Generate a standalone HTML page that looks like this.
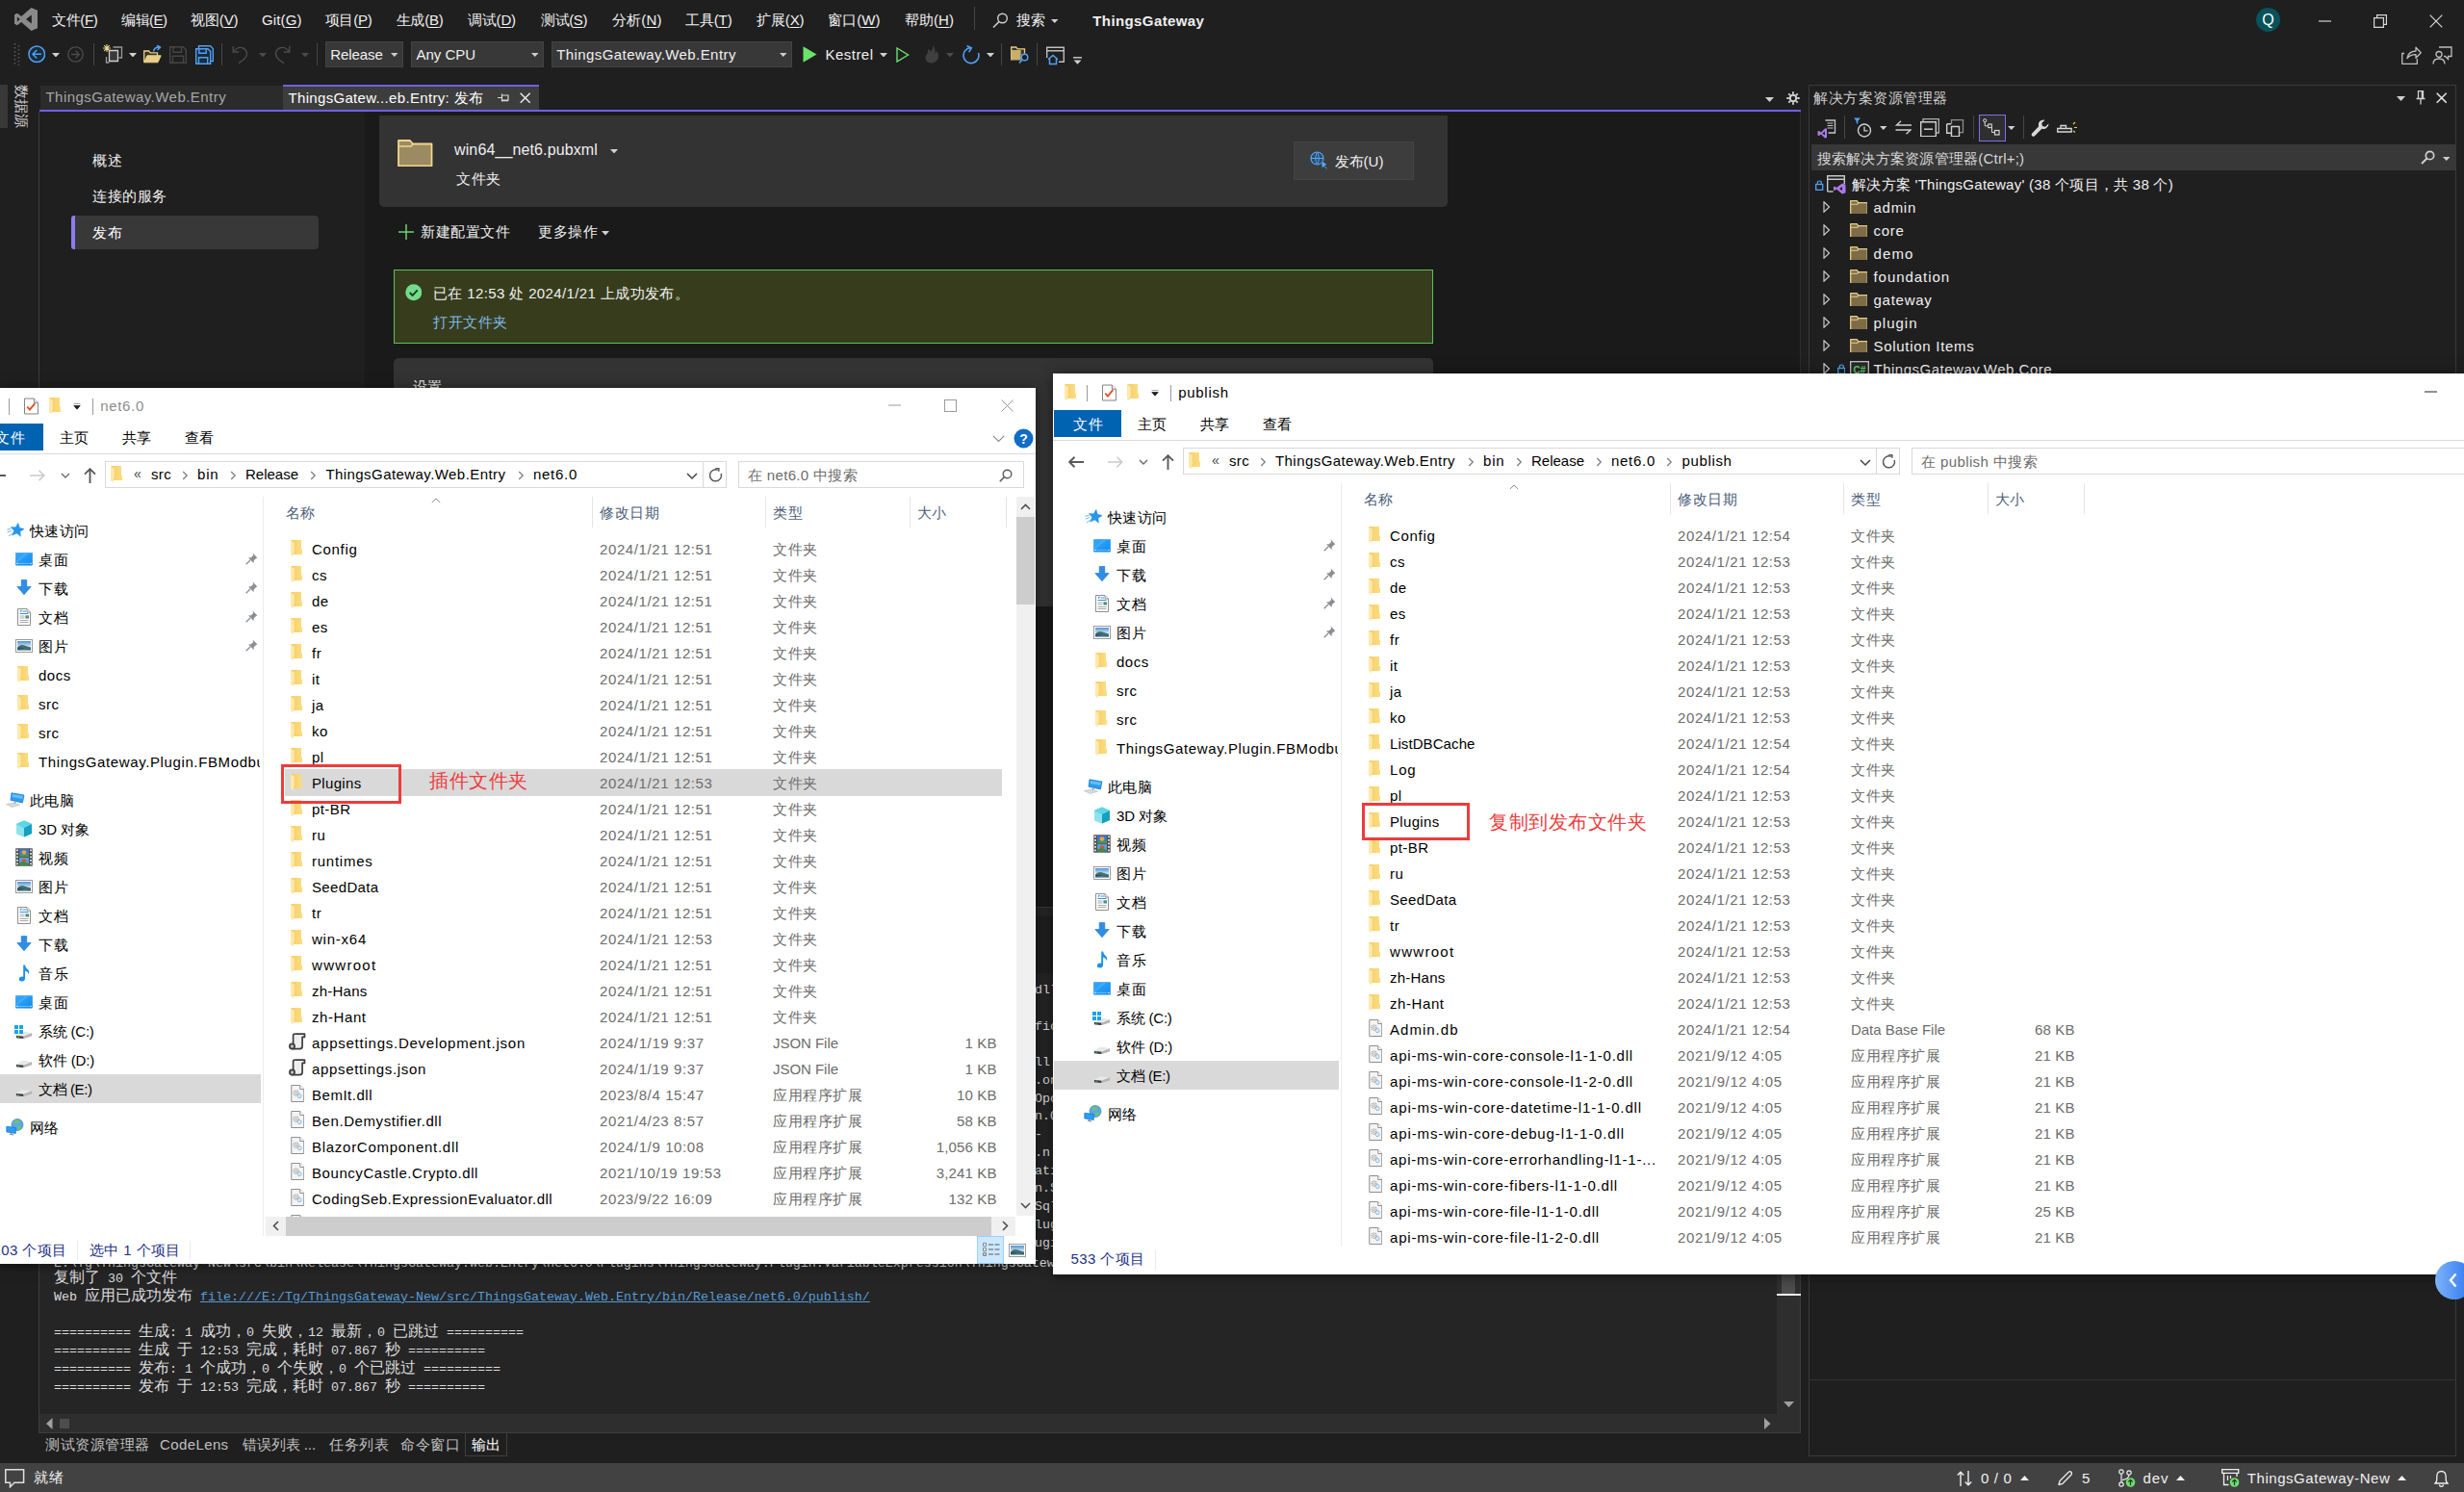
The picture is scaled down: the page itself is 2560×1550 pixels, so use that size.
<!DOCTYPE html>
<html lang="zh"><head><meta charset="utf-8"><title>ThingsGateway - Visual Studio</title>
<style>
html,body{margin:0;padding:0}
body{width:2560px;height:1550px;overflow:hidden;position:relative;background:#1f1f1f;font-family:"Liberation Sans",sans-serif;font-size:15px;color:#000}
.a{position:absolute;display:block}
.t{position:absolute;white-space:nowrap;font-size:15px;line-height:20px;letter-spacing:.5px}
.m{font-family:"Liberation Mono",monospace;font-size:13.333px;line-height:19px;letter-spacing:0}
.cj{font-size:16px}
u{text-decoration:underline;text-underline-offset:2px}
</style></head><body>

<svg width="0" height="0" style="position:absolute">
<defs>
<linearGradient id="gF" x1="0" y1="0" x2="1" y2="0"><stop offset="0" stop-color="#f5cd66"/><stop offset="1" stop-color="#fcdd82"/></linearGradient>
<linearGradient id="gB" x1="0" y1="0" x2="1" y2="1"><stop offset="0" stop-color="#35aaff"/><stop offset="1" stop-color="#118cec"/></linearGradient>
<linearGradient id="gC" x1="0" y1="0" x2="1" y2="0"><stop offset="0" stop-color="#7db3f8"/><stop offset="1" stop-color="#2673f2"/></linearGradient>
<linearGradient id="gP" x1="0" y1="0" x2="0" y2="1"><stop offset="0" stop-color="#4f93d6"/><stop offset="0.6" stop-color="#d8ebf6"/><stop offset="1" stop-color="#e8f2f6"/></linearGradient>
<linearGradient id="gD" x1="0" y1="0" x2="0" y2="1"><stop offset="0" stop-color="#e8e8e8"/><stop offset="1" stop-color="#a9a9a9"/></linearGradient>
</defs>
<!-- explorer folder 12x16 -->
<symbol id="fo" viewBox="0 0 12 17.4"><path d="M0 0h11v9.500l1 .3V15H2.800z" fill="url(#gF)"/><path d="M0 0.200L3.800 3v8.500L3.100 15l-.2 2.300L0 15.600z" fill="#fde9ab"/><path d="M3.800 3v8.500L3.100 15h.6V3z" fill="#f0c75e" opacity=".5"/></symbol>
<!-- dll file 14x18 -->
<symbol id="dl" viewBox="0 0 14 18"><path d="M0.5 0.5h9l4 4v13h-13z" fill="#f4f4f4" stroke="#8f8f8f"/><path d="M9.5 0.5v4h4" fill="#fff" stroke="#8f8f8f"/><circle cx="5.3" cy="8.6" r="2.6" fill="none" stroke="#9a9a9a" stroke-width="1.1" stroke-dasharray="1.2 .7"/><circle cx="5.3" cy="8.6" r="1" fill="none" stroke="#9a9a9a" stroke-width=".7"/><circle cx="8.9" cy="11.6" r="2" fill="#dcecf9" stroke="#4a9be0" stroke-width="1" stroke-dasharray="1 .6"/></symbol>
<!-- json scroll 18x18 -->
<symbol id="js" viewBox="0 0 18 18"><path d="M6.2 1.2h10.3v3.2h-2.4v9.3q0 3-3 3H3.4" fill="#eee" stroke="#3d3d3d" stroke-width="1.7" stroke-linejoin="round"/><path d="M6.2 1.2q-1.6 0-1.6 1.8v8.6" fill="none" stroke="#3d3d3d" stroke-width="1.7"/><circle cx="3.5" cy="14" r="2.6" fill="#bdbdbd" stroke="#3d3d3d" stroke-width="1.7"/></symbol>
<!-- quick access star 18x16 -->
<symbol id="st" viewBox="0 0 18 16"><path d="M10.800 0.300l2.100 4.700 5 .5-3.800 3.300 1.200 5-4.500-2.700-4.400 2.700 1.300-5L3.800 5.500l5-.5z" fill="#2498f0" stroke="#1a86dd" stroke-width=".4" transform="rotate(8 10.800 8)"/><path d="M0.300 7.200l4.200-.8M0.600 10l4.500-1.500M2 13.800l4.200-2.600" stroke="#6cbaf6" stroke-width="1"/></symbol>
<!-- desktop 18x14 -->
<symbol id="dk" viewBox="0 0 18 14"><rect x=".4" y=".4" width="17.2" height="12.8" rx=".5" fill="url(#gB)" stroke="#0f7fdc" stroke-width=".5"/><path d="M1 8.5L9.500 1h4L1 11z" fill="#6cc3ff" opacity=".35"/><path d="M1.300 11.400h1.500M15.200 11.400h1.500" stroke="#fff" stroke-width="1"/><path d="M3.600 11.400h10.800" stroke="#9ad6ff" stroke-width=".6"/></symbol>
<!-- download arrow 16x17 -->
<symbol id="dw" viewBox="0 0 16 17"><path d="M5.2 0.5h5.6v7h4.4L8 15.8 0.8 7.5h4.4z" fill="#2f8de4" stroke="#1f74c7" stroke-width=".6"/><path d="M3 16.3h10" stroke="#7fbcf0" stroke-width="0"/></symbol>
<!-- document 14x18 -->
<symbol id="dc" viewBox="0 0 14 18"><path d="M0.500 0.500h9.500l3.500 3.500v13.500h-13z" fill="#fff" stroke="#8f8f8f"/><path d="M10 0.500v3.500h3.500" fill="#f0f0f0" stroke="#8f8f8f"/><path d="M3 3.500l1.500-1.500M5.500 3h3.500M2.500 5.500h9" stroke="#2e8fe0" stroke-width="1.100"/><path d="M2.500 8h5M2.500 10h5M2.500 12.500h9M2.500 14.500h9" stroke="#a8a8a8" stroke-width="1"/><rect x="8.500" y="7.500" width="3.500" height="3" fill="#4f8a5a"/><path d="M8.500 7.500h3.500v1h-3.500z" fill="#5b9bd8"/></symbol>
<!-- pictures 18x14 -->
<symbol id="pc" viewBox="0 0 18 14"><rect x=".5" y=".5" width="17" height="13" fill="#fff" stroke="#9a9a9a"/><rect x="2" y="2" width="14" height="10" fill="url(#gP)"/><path d="M2 8.500q3.500-3.500 7.500-2t6.500 2V12H2z" fill="#456f6a"/><path d="M2 9.500q2-1.500 5-.5t9 1.500V12H2z" fill="#2f5560"/><path d="M2 11q7-1 14 0v1H2z" fill="#7ea6bd"/></symbol>
<!-- 3d cube 18x18 -->
<symbol id="cb" viewBox="0 0 18 18"><path d="M9 0.5l8 3.5v10l-8 3.5-8-3.5V4z" fill="#35c3dc"/><path d="M9 8v9.5L1 14V4z" fill="#8fe3ee"/><path d="M9 8l8-4v10l-8 3.5z" fill="#169fc0"/><path d="M9 0.5l8 3.5-8 4-8-4z" fill="#5fd6e6"/></symbol>
<!-- video 18x19 -->
<symbol id="vd" viewBox="0 0 18 19"><rect x=".3" y=".3" width="17.4" height="18.4" fill="#4a4a4a"/><rect x="4" y="1.2" width="10" height="8" fill="#3b78d8"/><rect x="4" y="10" width="10" height="8" fill="#5a9be6"/><circle cx="9" cy="4.6" r="2.4" fill="#e8a33c"/><path d="M4 8l3-2 3 2 4-3v4.2H4z" fill="#4c9a3c"/><circle cx="9" cy="13.5" r="2.3" fill="#d0573a"/><path d="M4 18v-2.5l4-1.5 6 2V18z" fill="#3c8a4a"/><path d="M1.2 1.5h1.6v1.8H1.2zM1.2 5h1.6v1.8H1.2zM1.2 8.5h1.6v1.8H1.2zM1.2 12h1.6v1.8H1.2zM1.2 15.5h1.6v1.8H1.2zM15.2 1.5h1.6v1.8h-1.6zM15.2 5h1.6v1.8h-1.6zM15.2 8.5h1.6v1.8h-1.6zM15.2 12h1.6v1.8h-1.6zM15.2 15.5h1.6v1.8h-1.6z" fill="#fff"/></symbol>
<!-- music 12x18 -->
<symbol id="mu" viewBox="0 0 12 18"><path d="M5.2 0.5h1.9q.3 3 2.6 4.6t1.2 5.4q-.3-3-3.8-4v7.7q0 3-3.2 3.3-3 .1-3.1-2.2.2-2.5 3.3-2.8.7 0 1.1.2z" fill="#1e90ea"/></symbol>
<!-- drive 18x9 -->
<symbol id="dr" viewBox="0 0 18 10"><path d="M0.5 6.2L7 2l10.5 1.4v3.3L8.5 9.6 0.5 8.8z" fill="#c9c9c9"/><path d="M0.5 6.2l8 1L17.5 3.4 7 2z" fill="#e9e9e9"/><path d="M0.5 6.2l8 1v2.4l-8-.8z" fill="#3a3a3a"/><path d="M8.5 7.2l9-3.8v3.3l-9 2.9z" fill="#b5b5b5"/><rect x="1.6" y="7.1" width="2" height=".9" fill="#39d353"/></symbol>
<!-- windows logo 9x9 -->
<symbol id="wl" viewBox="0 0 9 9"><path d="M0 0h4v4H0zM5 0h4v4H5zM0 5h4v4H0zM5 5h4v4H5z" fill="#1aa3ec"/></symbol>
<!-- network 20x18 -->
<symbol id="nw" viewBox="0 0 20 18"><circle cx="12" cy="6.5" r="6" fill="#5aa7e8"/><path d="M8 3q3-3 7-1-1 3-4 3.5T8 3zM12 8q3-1 5 1-1 3-4 3z" fill="#6fc36c"/><circle cx="12" cy="6.5" r="6" fill="none" stroke="#3a7fc2" stroke-width=".7"/><path d="M0.8 8.2l9.5 1.3v6l-9.5-1.6z" fill="#2a9df4" stroke="#1672c4" stroke-width=".7"/><path d="M4 16.2l4 .7M5.8 15v1.6" stroke="#7a8a99" stroke-width="1.1"/></symbol>
<!-- this pc 20x16 -->
<symbol id="tp" viewBox="0 0 20 16"><path d="M6 0.8l13 2.2-1.6 8L5 8.2z" fill="#2a9df4" stroke="#1672c4" stroke-width=".7"/><path d="M7 2l11 1.8-.6 3.2L6.6 5z" fill="#7fcaf9" opacity=".7"/><path d="M0.5 12.5l8-1.5 6 2.2-8 2.3z" fill="#d5dbe0" stroke="#aab3ba" stroke-width=".5"/><path d="M10 9.8l-.8 2" stroke="#9aa4ad" stroke-width="1.4"/></symbol>
<!-- pin 13x13 -->
<symbol id="pn" viewBox="0 0 13 13"><path d="M7.6 0.6l4.8 4.8-1.3.5-2.3 2.4-.3 2.8L3 5.500l2.800-.3 2.300-2.300z" fill="#8b8f94"/><path d="M5 8L0.700 12.300" stroke="#8b8f94" stroke-width="1.300"/></symbol>
<!-- checkbox title icon 16x18 -->
<symbol id="ck" viewBox="0 0 16 18"><path d="M0.5 0.5h10.5l4.500 4.500v12.500h-15z" fill="#fff" stroke="#7a7a7a"/><path d="M11 0.5v4.500h4.500" fill="#eee" stroke="#7a7a7a"/><path d="M3.500 9.500l2.800 3.300 5.700-6.800" fill="none" stroke="#e8491d" stroke-width="1.900"/></symbol>
</svg>
<svg class="a" style="left:15px;top:8px;" width="24" height="24" viewBox="0 0 24 24"><path d="M17.500 0L24 2.800v18.400L17.500 24 7.200 14.900 2.900 18.200 0 16.700V7.300l2.900-1.500 4.300 3.300zM17.800 7.600L12 12l5.800 4.400zM2.900 9.500v5l2.800-2.500z" fill="#8a8a8a" fill-rule="evenodd"/></svg><div class="t" style="top:11px;font-size:15px;line-height:20px;left:54px;color:#f0f0f0;letter-spacing:-0.331px;">文件(<u>F</u>)</div><div class="t" style="top:11px;font-size:15px;line-height:20px;left:126px;color:#f0f0f0;letter-spacing:-0.499px;">编辑(<u>E</u>)</div><div class="t" style="top:11px;font-size:15px;line-height:20px;left:198px;color:#f0f0f0;letter-spacing:-0.099px;">视图(<u>V</u>)</div><div class="t" style="top:11px;font-size:15px;line-height:20px;left:272px;color:#f0f0f0;letter-spacing:0.112px;">Git(<u>G</u>)</div><div class="t" style="top:11px;font-size:15px;line-height:20px;left:337.7px;color:#f0f0f0;letter-spacing:-0.239px;">项目(<u>P</u>)</div><div class="t" style="top:11px;font-size:15px;line-height:20px;left:411.7px;color:#f0f0f0;letter-spacing:-0.239px;">生成(<u>B</u>)</div><div class="t" style="top:11px;font-size:15px;line-height:20px;left:485.7px;color:#f0f0f0;letter-spacing:-0.105px;">调试(<u>D</u>)</div><div class="t" style="top:11px;font-size:15px;line-height:20px;left:562px;color:#f0f0f0;letter-spacing:-0.399px;">测试(<u>S</u>)</div><div class="t" style="top:11px;font-size:15px;line-height:20px;left:636px;color:#f0f0f0;letter-spacing:0.135px;">分析(<u>N</u>)</div><div class="t" style="top:11px;font-size:15px;line-height:20px;left:712px;color:#f0f0f0;letter-spacing:-0.131px;">工具(<u>T</u>)</div><div class="t" style="top:11px;font-size:15px;line-height:20px;left:786px;color:#f0f0f0;letter-spacing:-0.099px;">扩展(<u>X</u>)</div><div class="t" style="top:11px;font-size:15px;line-height:20px;left:860px;color:#f0f0f0;letter-spacing:0.070px;">窗口(<u>W</u>)</div><div class="t" style="top:11px;font-size:15px;line-height:20px;left:940px;color:#f0f0f0;letter-spacing:0.035px;">帮助(<u>H</u>)</div><div class="a" style="left:1012px;top:7px;width:1px;height:24px;background:#464646;"></div><svg class="a" style="left:1031px;top:12.5px;" width="17" height="17" viewBox="0 0 17 17"><circle cx="10.500" cy="6" r="4.800" fill="none" stroke="#d0d0d0" stroke-width="1.400"/><path d="M7 9.500L1 15.500" stroke="#d0d0d0" stroke-width="1.600"/></svg><div class="t" style="top:11px;font-size:15px;line-height:20px;left:1055.8px;color:#f0f0f0;">搜索</div><svg class="a" style="left:1092px;top:19.5px;" width="7.5" height="4" viewBox="0 0 7.5 4"><path d="M0 0h7.5 L3.75 4 z" fill="#d0d0d0"/></svg><div class="t" style="top:11.5px;font-size:15px;line-height:20px;left:1135.3px;color:#f0f0f0;letter-spacing:0.395px;font-weight:bold;">ThingsGateway</div><svg class="a" style="left:2343.5px;top:8px;" width="25" height="25" viewBox="0 0 25 25"><circle cx="12.500" cy="12.500" r="12.500" fill="#06535b"/><text x="12.500" y="18" text-anchor="middle" font-family="Liberation Sans" font-size="16" fill="#fff">Q</text></svg><svg class="a" style="left:2409px;top:21px;" width="13" height="2" viewBox="0 0 13 2"><path d="M0 1h13" stroke="#d6d6d6" stroke-width="1.200"/></svg><svg class="a" style="left:2466px;top:15px;" width="14" height="14" viewBox="0 0 14 14"><path d="M0.600 3.600h9.800v9.800H0.600zM3.600 3.600V0.600h9.800v9.800h-3" fill="none" stroke="#d6d6d6" stroke-width="1.200"/></svg><svg class="a" style="left:2524px;top:15px;" width="14" height="14" viewBox="0 0 14 14"><path d="M0.700 0.700l12.600 12.600M13.300 0.700L0.700 13.300" stroke="#d6d6d6" stroke-width="1.200"/></svg><svg class="a" style="left:2495px;top:47.5px;" width="21" height="19" viewBox="0 0 21 19"><path d="M3 7.500H0.700v10.800h15.600V13M6 12.500q1-7 9-7.500V1.200l5.200 5.500L15 12.200V8.600q-5.500-.2-9 3.900z" fill="none" stroke="#bdbdbd" stroke-width="1.300" stroke-linejoin="round"/></svg><svg class="a" style="left:2527px;top:47.5px;" width="21" height="19" viewBox="0 0 21 19"><path d="M7 1h13v9.500h-3.500v3l-3-3H12" fill="none" stroke="#bdbdbd" stroke-width="1.300"/><circle cx="7" cy="8.500" r="3" fill="none" stroke="#bdbdbd" stroke-width="1.300"/><path d="M1 18.500q0-5.500 6-5.500t6 5.500" fill="none" stroke="#bdbdbd" stroke-width="1.300"/></svg><svg class="a" style="left:13.5px;top:45px;" width="7" height="23" viewBox="0 0 7 23"><path d="M1.500 0v23M5.500 2v23" stroke="#5a5a5a" stroke-width="1.600" stroke-dasharray="1.600 2.400"/></svg><svg class="a" style="left:28.5px;top:47.3px;" width="18.5" height="18.5" viewBox="0 0 18.5 18.5"><circle cx="9.250" cy="9.250" r="8.300" fill="#1b2b3a" stroke="#4ea1f5" stroke-width="1.500"/><path d="M9.200 5L5 9.250l4.200 4.250M5 9.250h9" fill="none" stroke="#4ea1f5" stroke-width="1.500"/></svg><svg class="a" style="left:54px;top:54.75px;" width="8" height="4.5" viewBox="0 0 8 4.5"><path d="M0 0h8 L4 4.5 z" fill="#d0d0d0"/></svg><svg class="a" style="left:70px;top:48.3px;" width="17" height="17" viewBox="0 0 17 17"><circle cx="8.500" cy="8.500" r="7.700" fill="none" stroke="#4b4b4b" stroke-width="1.300"/><path d="M8.500 4.700l3.800 3.800-3.800 3.800M12.300 8.500H4" fill="none" stroke="#4b4b4b" stroke-width="1.300"/></svg><div class="a" style="left:97px;top:44.5px;width:1px;height:23.5px;background:#464646;"></div><svg class="a" style="left:107px;top:46px;" width="21" height="21" viewBox="0 0 21 21"><path d="M6.500 6.500h9v11h-9z" fill="#3a3a3a" stroke="#cfcfcf" stroke-width="1.300"/><path d="M10.500 3h9v11h-3" fill="none" stroke="#9a9a9a" stroke-width="1.300"/><path d="M3.500 13v6h3" fill="none" stroke="#9a9a9a" stroke-width="1.300"/><path d="M4 0v8M0 4h8M1.200 1.200l5.600 5.600M6.800 1.200L1.200 6.800" stroke="#f0d98c" stroke-width="1.100"/></svg><svg class="a" style="left:134px;top:54.75px;" width="8" height="4.5" viewBox="0 0 8 4.5"><path d="M0 0h8 L4 4.5 z" fill="#d0d0d0"/></svg><svg class="a" style="left:148.5px;top:46.5px;" width="19.5" height="19" viewBox="0 0 19.5 19"><path d="M0.700 17.800V6h5l1.500 1.800h7.300v3" fill="#3a3320" stroke="#e8cf8a" stroke-width="1.300"/><path d="M0.700 17.800l3.200-7h14.300l-3.200 7z" fill="#e8cf8a" stroke="#e8cf8a" stroke-width="1"/><path d="M10.500 6.500q.5-4.500 6-4.500M14 0l3.500 2.200L14.500 5" fill="none" stroke="#4ea1f5" stroke-width="1.500"/></svg><svg class="a" style="left:176px;top:48px;" width="18" height="18" viewBox="0 0 18 18"><path d="M0.700 0.700h13.600l3 3v13.600H0.700z" fill="none" stroke="#454545" stroke-width="1.400"/><path d="M4 0.700v5.500h8.500V0.700M3.500 17.300v-7h11v7" fill="none" stroke="#454545" stroke-width="1.400"/></svg><svg class="a" style="left:202.5px;top:46.5px;" width="19" height="20" viewBox="0 0 19 20"><path d="M3.500 3V0.700h12l2.800 2.800v13H16" fill="none" stroke="#4ea1f5" stroke-width="1.400"/><path d="M0.700 3.700h12.300l2.700 2.700v12.900H0.700z" fill="#1b2b3a" stroke="#4ea1f5" stroke-width="1.400"/><path d="M3.800 3.700v4.500h7.400V3.700M3.500 19.300v-6.500h9.200v6.500" fill="none" stroke="#4ea1f5" stroke-width="1.400"/></svg><div class="a" style="left:230px;top:44.5px;width:1px;height:23.5px;background:#464646;"></div><svg class="a" style="left:241px;top:47px;" width="17" height="19" viewBox="0 0 17 19"><path d="M1.200 1v6h6" fill="none" stroke="#4b4b4b" stroke-width="1.400"/><path d="M1.500 6.800Q5 1.800 10 2.500q5 1 5.500 6 0 3.500-3.500 6.500l-5 3.800" fill="none" stroke="#4b4b4b" stroke-width="1.400"/></svg><svg class="a" style="left:268.5px;top:54.75px;" width="8" height="4.5" viewBox="0 0 8 4.5"><path d="M0 0h8 L4 4.5 z" fill="#4b4b4b"/></svg><svg class="a" style="left:285px;top:47px;" width="17" height="19" viewBox="0 0 17 19"><path d="M15.800 1v6h-6" fill="none" stroke="#4b4b4b" stroke-width="1.400"/><path d="M15.500 6.800Q12 1.800 7 2.500q-5 1-5.500 6 0 3.500 3.500 6.500l5 3.800" fill="none" stroke="#4b4b4b" stroke-width="1.400"/></svg><svg class="a" style="left:313px;top:54.75px;" width="8" height="4.5" viewBox="0 0 8 4.5"><path d="M0 0h8 L4 4.5 z" fill="#4b4b4b"/></svg><div class="a" style="left:328.5px;top:44.5px;width:1px;height:23.5px;background:#464646;"></div><div class="a" style="left:337.7px;top:43px;width:81px;height:27px;background:#383838;border:1px solid #434343;box-sizing:border-box;"></div><div class="t" style="top:46.5px;font-size:15px;line-height:20px;left:343.2px;color:#f0f0f0;letter-spacing:-0.062px;">Release</div><svg class="a" style="left:406px;top:55px;" width="7.5" height="4" viewBox="0 0 7.5 4"><path d="M0 0h7.5 L3.75 4 z" fill="#cfcfcf"/></svg><div class="a" style="left:427px;top:43px;width:138px;height:27px;background:#383838;border:1px solid #434343;box-sizing:border-box;"></div><div class="t" style="top:46.5px;font-size:15px;line-height:20px;left:432.5px;color:#f0f0f0;letter-spacing:-0.027px;">Any CPU</div><svg class="a" style="left:551.5px;top:55px;" width="7.5" height="4" viewBox="0 0 7.5 4"><path d="M0 0h7.5 L3.75 4 z" fill="#cfcfcf"/></svg><div class="a" style="left:572.7px;top:43px;width:250.3px;height:27px;background:#383838;border:1px solid #434343;box-sizing:border-box;"></div><div class="t" style="top:46.5px;font-size:15px;line-height:20px;left:578.2px;color:#f0f0f0;letter-spacing:0.417px;">ThingsGateway.Web.Entry</div><svg class="a" style="left:810px;top:55px;" width="7.5" height="4" viewBox="0 0 7.5 4"><path d="M0 0h7.5 L3.75 4 z" fill="#cfcfcf"/></svg><svg class="a" style="left:834px;top:47.5px;" width="15" height="17" viewBox="0 0 15 17"><path d="M0.500 0.300L14.500 8.500 0.500 16.700z" fill="#6be36b"/></svg><div class="t" style="top:46.5px;font-size:15px;line-height:20px;left:857.5px;color:#f0f0f0;letter-spacing:0.473px;">Kestrel</div><svg class="a" style="left:914px;top:54.75px;" width="8" height="4.5" viewBox="0 0 8 4.5"><path d="M0 0h8 L4 4.5 z" fill="#d0d0d0"/></svg><svg class="a" style="left:931px;top:48.5px;" width="14" height="16" viewBox="0 0 14 16"><path d="M1 1L12.500 8 1 15z" fill="none" stroke="#6be36b" stroke-width="1.400"/></svg><svg class="a" style="left:958.5px;top:46px;" width="18" height="21" viewBox="0 0 18 21"><path d="M10 0.500q1 4-2 7-1-2-3-2.500 1 3-1.500 6Q1 14.500 4 18q3 2.500 7.500 1 5-2.500 4.500-8-.5-3-2.500-4.500.5 2-1 3.500Q13 4.500 10 0.500z" fill="#3f3f3f"/></svg><svg class="a" style="left:983px;top:54.75px;" width="8" height="4.5" viewBox="0 0 8 4.5"><path d="M0 0h8 L4 4.5 z" fill="#4b4b4b"/></svg><svg class="a" style="left:998.5px;top:46.5px;" width="19" height="20" viewBox="0 0 19 20"><path d="M10 2.600A8 8 0 1 0 17.500 8" fill="none" stroke="#4ea1f5" stroke-width="1.600"/><path d="M5.500 0.500l4.800 2.300-2.600 4.400" fill="none" stroke="#4ea1f5" stroke-width="1.600"/></svg><svg class="a" style="left:1025px;top:54.75px;" width="8" height="4.5" viewBox="0 0 8 4.5"><path d="M0 0h8 L4 4.5 z" fill="#d0d0d0"/></svg><div class="a" style="left:1040px;top:44.5px;width:1px;height:23.5px;background:#464646;"></div><svg class="a" style="left:1050px;top:47.5px;" width="20" height="19" viewBox="0 0 20 19"><path d="M0.700 14.500V1h5l1.500 1.800h7.300v5" fill="#3a3320" stroke="#e8cf8a" stroke-width="1.300"/><path d="M0.700 4h10v10.500h-10z" fill="#c9ae6a"/><circle cx="14.500" cy="11.500" r="3.300" fill="#1f1f1f" stroke="#4ea1f5" stroke-width="1.500"/><path d="M12 14l-3 3.500" stroke="#4ea1f5" stroke-width="1.700"/></svg><div class="a" style="left:1077px;top:44.5px;width:1px;height:23.5px;background:#464646;"></div><svg class="a" style="left:1086.5px;top:47.5px;" width="19" height="20" viewBox="0 0 19 20"><path d="M0.700 12V1.200h17.600V12M0.700 4.800h17.600" fill="none" stroke="#bdbdbd" stroke-width="1.400"/><path d="M13 16.300h5.300V12" fill="none" stroke="#bdbdbd" stroke-width="1.400"/><path d="M2 13.800L7 9.500l5 4.300M3.500 13v5.500h7V13" fill="none" stroke="#4ea1f5" stroke-width="1.500"/></svg><svg class="a" style="left:1114.5px;top:58.5px;" width="9" height="8" viewBox="0 0 9 8"><path d="M0 0.800h9" stroke="#d0d0d0" stroke-width="1.400"/><path d="M0.500 3.500h8L4.500 7.800z" fill="#d0d0d0"/></svg><div class="a" style="left:0px;top:88px;width:8px;height:45px;background:#383838;"></div><div class="t" style="left:29.500px;top:88px;font-size:15px;line-height:16px;letter-spacing:0;color:#d0d0d0;transform-origin:0 0;transform:rotate(90deg)">数据源</div><div class="a" style="left:41px;top:116px;width:1830px;height:830px;background:#1a1a1a;"></div><div class="a" style="left:41px;top:116px;width:338px;height:830px;background:#1f1f1f;"></div><div class="a" style="left:40px;top:116px;width:1px;height:830px;background:#3d3d3d;"></div><div class="a" style="left:1870px;top:116px;width:1px;height:830px;background:#2c2c2c;"></div><div class="a" style="left:41.5px;top:89px;width:252px;height:25px;background:#2b2b2b;"></div><div class="t" style="top:91px;font-size:15px;line-height:20px;left:47.5px;color:#a6a6a6;letter-spacing:0.461px;">ThingsGateway.Web.Entry</div><div class="a" style="left:294px;top:88px;width:266px;height:26px;background:#3d3d3d;"></div><div class="a" style="left:294px;top:88px;width:266px;height:2px;background:#7160e8;"></div><div class="t" style="top:91.5px;font-size:15px;line-height:20px;left:299.5px;color:#fff;letter-spacing:0.324px;">ThingsGatew...eb.Entry: 发布</div><svg class="a" style="left:516.5px;top:96px;" width="12" height="11" viewBox="0 0 12 11"><path d="M0 5.500h4.500M4.500 1.500v8M4.500 3h6.500v5H4.500M11 8.700H4.500" fill="none" stroke="#d8d8d8" stroke-width="1.200"/></svg><svg class="a" style="left:540px;top:96px;" width="11.5" height="11.5" viewBox="0 0 11.5 11.5"><path d="M0.700 0.700l10 10M10.700 0.700l-10 10" stroke="#e8e8e8" stroke-width="1.500"/></svg><div class="a" style="left:41px;top:113.5px;width:1829.5px;height:2.5px;background:#7160e8;"></div><svg class="a" style="left:1834px;top:101px;" width="9" height="5" viewBox="0 0 9 5"><path d="M0 0h9 L4.5 5 z" fill="#d0d0d0"/></svg><svg class="a" style="left:1855.5px;top:94.5px;" width="14" height="14" viewBox="0 0 14 14"><circle cx="7" cy="7" r="3.200" fill="none" stroke="#d0d0d0" stroke-width="2"/><path d="M7 0.300v2.500M7 11.200v2.500M0.300 7h2.500M11.200 7h2.500M2.300 2.300l1.800 1.800M9.900 9.900l1.800 1.800M11.700 2.300L9.900 4.100M4.100 9.900l-1.800 1.800" stroke="#d0d0d0" stroke-width="1.900"/></svg><div class="t" style="top:156.5px;font-size:15px;line-height:20px;left:96px;color:#f0f0f0;">概述</div><div class="t" style="top:194px;font-size:15px;line-height:20px;left:96px;color:#f0f0f0;">连接的服务</div><div class="a" style="left:74px;top:224px;width:257px;height:35px;background:#383838;border-radius:4px;"></div><div class="a" style="left:74px;top:224px;width:3.5px;height:35px;background:#8d7df0;border-radius:3px 0 0 3px;"></div><div class="t" style="top:231.5px;font-size:15px;line-height:20px;left:96px;color:#fff;">发布</div><div class="a" style="left:394px;top:119.5px;width:1109.5px;height:95px;background:#333333;border-radius:0 0 5px 5px;"></div><svg class="a" style="left:413px;top:144.5px;" width="36.5" height="28.5" viewBox="0 0 36.5 28.5"><path d="M1 27.500V1h12l3 3.500h19.500v23z" fill="#9c8a62" stroke="#f3d58e" stroke-width="1.800" stroke-linejoin="round"/><path d="M1 7h13l2.500-2.800" fill="none" stroke="#f3d58e" stroke-width="1.600"/></svg><div class="t" style="top:145.5px;font-size:16px;line-height:20px;left:472px;color:#f0f0f0;letter-spacing:0.124px;">win64__net6.pubxml</div><svg class="a" style="left:633.5px;top:154.75px;" width="8" height="4.5" viewBox="0 0 8 4.5"><path d="M0 0h8 L4 4.5 z" fill="#d0d0d0"/></svg><div class="t" style="top:176px;font-size:15px;line-height:20px;left:474px;color:#f0f0f0;">文件夹</div><div class="a" style="left:1344px;top:147px;width:125px;height:40px;background:#3d3d3d;border:1px solid #444;box-sizing:border-box;"></div><svg class="a" style="left:1360.5px;top:157px;" width="19" height="20" viewBox="0 0 19 20"><circle cx="7.500" cy="7.500" r="6.500" fill="#2b4a6a" stroke="#58a6f0" stroke-width="1.200"/><path d="M1 7.500h13M7.500 1q-3.500 6.500 0 13M7.500 1q3.500 6.500 0 13" fill="none" stroke="#58a6f0" stroke-width="1"/><path d="M11.500 9.500l1 9 2-2.500 2.800 3 1-.8-2.800-3.200 3-.8z" fill="#58a6f0" stroke="#2b2b2b" stroke-width=".6"/></svg><div class="t" style="top:157.5px;font-size:15px;line-height:20px;left:1386.5px;color:#f0f0f0;letter-spacing:0.035px;">发布(U)</div><svg class="a" style="left:413.5px;top:232.5px;" width="16" height="16" viewBox="0 0 16 16"><path d="M8 0v16M0 8h16" stroke="#6fd16f" stroke-width="1.500"/></svg><div class="t" style="top:230.5px;font-size:15px;line-height:20px;left:437px;color:#f0f0f0;">新建配置文件</div><div class="t" style="top:230.5px;font-size:15px;line-height:20px;left:559px;color:#f0f0f0;">更多操作</div><svg class="a" style="left:624.5px;top:240.25px;" width="8" height="4.5" viewBox="0 0 8 4.5"><path d="M0 0h8 L4 4.5 z" fill="#d0d0d0"/></svg><div class="a" style="left:409px;top:280px;width:1080px;height:77px;background:#373d1c;border:1px solid #5fbf5a;box-sizing:border-box;"></div><svg class="a" style="left:420.5px;top:295px;" width="17.5" height="17.5" viewBox="0 0 17.5 17.5"><circle cx="8.750" cy="8.750" r="8.500" fill="#73dc8c"/><path d="M4.700 9l2.900 2.900 5.200-5.600" fill="none" stroke="#1d3a22" stroke-width="1.800"/></svg><div class="t" style="top:295px;font-size:15px;line-height:20px;left:450px;color:#f0f0f0;letter-spacing:0.373px;">已在 12:53 处 2024/1/21 上成功发布。</div><div class="t" style="top:324.5px;font-size:15px;line-height:20px;left:450px;color:#7fb8e8;">打开文件夹</div><div class="a" style="left:409px;top:372px;width:1080px;height:258px;background:#333333;border-radius:5px 5px 0 0;"></div><div class="t" style="top:391.5px;font-size:15px;line-height:20px;left:428.5px;color:#f0f0f0;">设置</div><div class="a" style="left:1879px;top:88px;width:673px;height:1425px;background:#1f1f1f;border:1px solid #3a3a3a;box-sizing:border-box;"></div><div class="a" style="left:1879px;top:1433px;width:673px;height:1px;background:#333333;"></div><div class="t" style="top:92px;font-size:15px;line-height:20px;left:1884px;color:#cdcdcd;">解决方案资源管理器</div><svg class="a" style="left:2490px;top:99.5px;" width="9" height="5" viewBox="0 0 9 5"><path d="M0 0h9 L4.5 5 z" fill="#d0d0d0"/></svg><svg class="a" style="left:2510px;top:94px;" width="10" height="15" viewBox="0 0 10 15"><path d="M2.500 0.700h5v7.800h-5zM0.500 8.500h9M5 8.500V14.500M6.300 0.700v7.800" fill="none" stroke="#d0d0d0" stroke-width="1.300"/></svg><svg class="a" style="left:2531px;top:96px;" width="11.5" height="11.5" viewBox="0 0 11.5 11.5"><path d="M0.700 0.700l10 10M10.700 0.700l-10 10" stroke="#e0e0e0" stroke-width="1.600"/></svg><svg class="a" style="left:1887.5px;top:123.5px;" width="20" height="20" viewBox="0 0 20 20"><path d="M8.500 1h10v13h-7" fill="none" stroke="#c8c8c8" stroke-width="1.300"/><path d="M10.500 4h6M10.500 6.500h6M10.500 9h6" stroke="#c8c8c8" stroke-width="1.100"/><path d="M10 9.500v9.500l-2 .5-4-4-2 1.500L0.500 16.500v-4L2 12l2 1.500 4-4zM8 12.500L5.300 14.500 8 16.500z" fill="#a97be8" fill-rule="evenodd"/></svg><div class="a" style="left:1916px;top:120px;width:1px;height:24px;background:#464646;"></div><svg class="a" style="left:1925.5px;top:121.5px;" width="19" height="22" viewBox="0 0 19 22"><path d="M0 0.500h7L4.300 3.800v3L2.700 6V3.800z" fill="#4ea1f5"/><circle cx="11" cy="13.500" r="6.500" fill="none" stroke="#d0d0d0" stroke-width="1.400"/><path d="M11 9.500v4.300h3.500" fill="none" stroke="#d0d0d0" stroke-width="1.300"/></svg><svg class="a" style="left:1953px;top:131px;" width="7.5" height="4" viewBox="0 0 7.5 4"><path d="M0 0h7.5 L3.75 4 z" fill="#d0d0d0"/></svg><svg class="a" style="left:1968.5px;top:124.5px;" width="17.5" height="15" viewBox="0 0 17.5 15"><path d="M17 5H1.500L6 0.800M0.500 10H16L11.500 14.200" fill="none" stroke="#d0d0d0" stroke-width="1.400"/></svg><svg class="a" style="left:1994.5px;top:122.5px;" width="20" height="19.5" viewBox="0 0 20 19.5"><path d="M3 3V0.700h16.300V15H17" fill="none" stroke="#b0b0b0" stroke-width="1.300"/><path d="M0.700 3.700h15.600v15H0.700z" fill="none" stroke="#d0d0d0" stroke-width="1.400"/><path d="M4 11.200h9" stroke="#d0d0d0" stroke-width="1.500"/></svg><svg class="a" style="left:2022px;top:123.5px;" width="18.5" height="18.5" viewBox="0 0 18.5 18.5"><path d="M5.500 4.500V0.700h12v13h-4" fill="none" stroke="#8f8f8f" stroke-width="1.300"/><path d="M0.700 4.700h4.500M0.700 4.700v9.500h4.500M5.500 7.500h8v10.300h-8z" fill="none" stroke="#d0d0d0" stroke-width="1.400"/></svg><div class="a" style="left:2049.5px;top:120px;width:1px;height:24px;background:#464646;"></div><div class="a" style="left:2056px;top:119px;width:27.5px;height:27.5px;background:#2f2f2f;border:1px solid #7d6ff0;box-sizing:border-box;"></div><svg class="a" style="left:2060px;top:123px;" width="19" height="19" viewBox="0 0 19 19"><circle cx="2.200" cy="2.200" r="1.600" fill="none" stroke="#d8d8d8" stroke-width="1"/><path d="M2.200 4v3.800h3M9.500 10v4.500h3" fill="none" stroke="#d8d8d8" stroke-width="1"/><rect x="5.700" y="6" width="3.600" height="3.600" fill="none" stroke="#d8d8d8" stroke-width="1.100"/><rect x="12.500" y="12.500" width="4.500" height="4.500" fill="none" stroke="#d8d8d8" stroke-width="1.200"/></svg><svg class="a" style="left:2086px;top:131px;" width="7.5" height="4" viewBox="0 0 7.5 4"><path d="M0 0h7.5 L3.75 4 z" fill="#d0d0d0"/></svg><div class="a" style="left:2101.5px;top:120px;width:1px;height:24px;background:#464646;"></div><svg class="a" style="left:2110px;top:123.5px;" width="19.5" height="19" viewBox="0 0 19.5 19"><path d="M18.300 4.500l-3.300 3.300-3-.8-.8-3L14.500 0.700q-3-.8-5.300 1.400-2 2.200-1 5.200L0.800 15q-.5 1.500.8 2.500 1.300.8 2.300-.2l7.500-7.600q3 1 5.300-1.200 2.200-2.200 1.600-4z" fill="#d8d8d8"/></svg><svg class="a" style="left:2137px;top:126px;" width="22" height="12" viewBox="0 0 22 12"><path d="M0.700 11V7.500h14.500V11zM4 7.500V4.500h5.500v3" fill="none" stroke="#d8d8d8" stroke-width="1.300"/><path d="M17 3l2-2M18 6.500h3M17 10l2 1.500" stroke="#e5c36b" stroke-width="1.200"/></svg><div class="a" style="left:1882px;top:150px;width:668.5px;height:27px;background:#383838;"></div><div class="t" style="top:154.5px;font-size:15px;line-height:20px;left:1887.8px;color:#d6d6d6;letter-spacing:0.224px;">搜索解决方案资源管理器(Ctrl+;)</div><svg class="a" style="left:2514.5px;top:156px;" width="15" height="15" viewBox="0 0 15 15"><circle cx="9.500" cy="5.500" r="4.200" fill="none" stroke="#d0d0d0" stroke-width="1.700"/><path d="M6.500 8.500L1 14" stroke="#d0d0d0" stroke-width="2"/></svg><svg class="a" style="left:2537.5px;top:163px;" width="7.5" height="4" viewBox="0 0 7.5 4"><path d="M0 0h7.5 L3.75 4 z" fill="#d0d0d0"/></svg><svg class="a" style="left:1886px;top:186.5px;" width="8.5" height="11" viewBox="0 0 8.5 11"><rect x=".7" y="4.500" width="7" height="5.800" fill="none" stroke="#4ea1f5" stroke-width="1.300"/><path d="M2.300 4.500V3q0-2 2-2t2 2v1.500" fill="none" stroke="#4ea1f5" stroke-width="1.200"/></svg><svg class="a" style="left:1898px;top:182px;" width="20" height="20" viewBox="0 0 20 20"><path d="M0.700 17V0.700h17.600V9M0.700 4.300h17.600" fill="none" stroke="#c8c8c8" stroke-width="1.400"/><path d="M0.700 17h6" stroke="#c8c8c8" stroke-width="1.400"/><path d="M16 8.500l3.500 1.300v8.400L16 19.500 10 14.500l-2 1.500-1-.5v-3.500l1-.5 2 1.500zM16 12l-3 2 3 2z" fill="#a97be8" fill-rule="evenodd"/></svg><div class="t" style="top:181.5px;font-size:15px;line-height:20px;left:1924px;color:#f0f0f0;letter-spacing:0.274px;">解决方案 'ThingsGateway' (38 个项目，共 38 个)</div><svg class="a" style="left:1893.5px;top:209px;" width="8" height="12" viewBox="0 0 8 12"><path d="M1 0.800L6.500 6 1 11.200z" fill="none" stroke="#c8c8c8" stroke-width="1.200"/></svg><svg class="a" style="left:1921.5px;top:207.7px;" width="18" height="14.7" viewBox="0 0 18 14.7"><path d="M0.700 14.700V0.700h6.500l1.600 2h9.500v12z" fill="#7d6c46" stroke="#e8cf8a" stroke-width="1.300" stroke-linejoin="round"/><path d="M0.700 4.200h7l1.500-1.500" fill="none" stroke="#e8cf8a" stroke-width="1.100"/></svg><div class="t" style="top:205.5px;font-size:15px;line-height:20px;left:1946.5px;color:#f0f0f0;letter-spacing:0.729px;">admin</div><svg class="a" style="left:1893.5px;top:233px;" width="8" height="12" viewBox="0 0 8 12"><path d="M1 0.800L6.500 6 1 11.200z" fill="none" stroke="#c8c8c8" stroke-width="1.200"/></svg><svg class="a" style="left:1921.5px;top:231.7px;" width="18" height="14.7" viewBox="0 0 18 14.7"><path d="M0.700 14.700V0.700h6.500l1.600 2h9.500v12z" fill="#7d6c46" stroke="#e8cf8a" stroke-width="1.300" stroke-linejoin="round"/><path d="M0.700 4.200h7l1.500-1.500" fill="none" stroke="#e8cf8a" stroke-width="1.100"/></svg><div class="t" style="top:229.5px;font-size:15px;line-height:20px;left:1946.5px;color:#f0f0f0;letter-spacing:0.705px;">core</div><svg class="a" style="left:1893.5px;top:257px;" width="8" height="12" viewBox="0 0 8 12"><path d="M1 0.800L6.500 6 1 11.200z" fill="none" stroke="#c8c8c8" stroke-width="1.200"/></svg><svg class="a" style="left:1921.5px;top:255.7px;" width="18" height="14.7" viewBox="0 0 18 14.7"><path d="M0.700 14.700V0.700h6.500l1.600 2h9.500v12z" fill="#7d6c46" stroke="#e8cf8a" stroke-width="1.300" stroke-linejoin="round"/><path d="M0.700 4.200h7l1.500-1.500" fill="none" stroke="#e8cf8a" stroke-width="1.100"/></svg><div class="t" style="top:253.5px;font-size:15px;line-height:20px;left:1946.5px;color:#f0f0f0;letter-spacing:1.119px;">demo</div><svg class="a" style="left:1893.5px;top:281px;" width="8" height="12" viewBox="0 0 8 12"><path d="M1 0.800L6.500 6 1 11.200z" fill="none" stroke="#c8c8c8" stroke-width="1.200"/></svg><svg class="a" style="left:1921.5px;top:279.7px;" width="18" height="14.7" viewBox="0 0 18 14.7"><path d="M0.700 14.700V0.700h6.500l1.600 2h9.500v12z" fill="#7d6c46" stroke="#e8cf8a" stroke-width="1.300" stroke-linejoin="round"/><path d="M0.700 4.200h7l1.500-1.500" fill="none" stroke="#e8cf8a" stroke-width="1.100"/></svg><div class="t" style="top:277.5px;font-size:15px;line-height:20px;left:1946.5px;color:#f0f0f0;letter-spacing:0.943px;">foundation</div><svg class="a" style="left:1893.5px;top:305px;" width="8" height="12" viewBox="0 0 8 12"><path d="M1 0.800L6.500 6 1 11.200z" fill="none" stroke="#c8c8c8" stroke-width="1.200"/></svg><svg class="a" style="left:1921.5px;top:303.7px;" width="18" height="14.7" viewBox="0 0 18 14.7"><path d="M0.700 14.700V0.700h6.500l1.600 2h9.500v12z" fill="#7d6c46" stroke="#e8cf8a" stroke-width="1.300" stroke-linejoin="round"/><path d="M0.700 4.200h7l1.500-1.500" fill="none" stroke="#e8cf8a" stroke-width="1.100"/></svg><div class="t" style="top:301.5px;font-size:15px;line-height:20px;left:1946.5px;color:#f0f0f0;letter-spacing:0.733px;">gateway</div><svg class="a" style="left:1893.5px;top:329px;" width="8" height="12" viewBox="0 0 8 12"><path d="M1 0.800L6.500 6 1 11.200z" fill="none" stroke="#c8c8c8" stroke-width="1.200"/></svg><svg class="a" style="left:1921.5px;top:327.7px;" width="18" height="14.7" viewBox="0 0 18 14.7"><path d="M0.700 14.700V0.700h6.500l1.600 2h9.500v12z" fill="#7d6c46" stroke="#e8cf8a" stroke-width="1.300" stroke-linejoin="round"/><path d="M0.700 4.200h7l1.500-1.500" fill="none" stroke="#e8cf8a" stroke-width="1.100"/></svg><div class="t" style="top:325.5px;font-size:15px;line-height:20px;left:1946.5px;color:#f0f0f0;letter-spacing:0.994px;">plugin</div><svg class="a" style="left:1893.5px;top:353px;" width="8" height="12" viewBox="0 0 8 12"><path d="M1 0.800L6.500 6 1 11.200z" fill="none" stroke="#c8c8c8" stroke-width="1.200"/></svg><svg class="a" style="left:1921.5px;top:351.7px;" width="18" height="14.7" viewBox="0 0 18 14.7"><path d="M0.700 14.700V0.700h6.500l1.600 2h9.500v12z" fill="#7d6c46" stroke="#e8cf8a" stroke-width="1.300" stroke-linejoin="round"/><path d="M0.700 4.200h7l1.500-1.500" fill="none" stroke="#e8cf8a" stroke-width="1.100"/></svg><div class="t" style="top:349.5px;font-size:15px;line-height:20px;left:1946.5px;color:#f0f0f0;letter-spacing:0.711px;">Solution Items</div><div class="a" style="left:1880px;top:372px;width:672px;height:16px;overflow:hidden"><svg class="a" style="left:13.5px;top:4.5px;" width="8" height="12" viewBox="0 0 8 12"><path d="M1 0.800L6.500 6 1 11.200z" fill="none" stroke="#c8c8c8" stroke-width="1.200"/></svg><svg class="a" style="left:28.5px;top:5.5px;" width="8.5" height="11" viewBox="0 0 8.5 11"><rect x=".7" y="4.500" width="7" height="5.800" fill="none" stroke="#4ea1f5" stroke-width="1.300"/><path d="M2.300 4.500V3q0-2 2-2t2 2v1.500" fill="none" stroke="#4ea1f5" stroke-width="1.200"/></svg><svg class="a" style="left:41.5px;top:3px;" width="20" height="17" viewBox="0 0 20 17"><rect x=".7" y=".7" width="18.600" height="15.600" fill="none" stroke="#c8c8c8" stroke-width="1.300"/><rect x="2" y="2.500" width="16" height="12" fill="#2a2a2a"/><text x="3.500" y="12.500" font-size="10" font-family="Liberation Sans" font-weight="bold" fill="#5fd068">C#</text></svg><div class="t" style="top:1.5px;font-size:15px;line-height:20px;left:66.5px;color:#f0f0f0;letter-spacing:0.504px;">ThingsGateway.Web.Core</div></div><div class="a" style="left:40.5px;top:942px;width:1830.5px;height:547px;background:#1f1f1f;border:1px solid #3a3a3a;box-sizing:border-box;"></div><div class="a" style="left:41px;top:942.5px;width:1829.5px;height:9px;background:#262626;"></div><div class="a" style="left:41px;top:1011px;width:1805px;height:458px;background:#252526;"></div><div class="a" style="left:1846px;top:1011px;width:24.5px;height:478px;background:#2e2e2e;"></div><div class="a" style="left:41px;top:1469px;width:1805px;height:19.5px;background:#2e2e2e;"></div><div class="a" style="left:40px;top:942px;width:1px;height:547px;background:#3d3d3d;"></div><div class="a" style="left:40px;top:1488px;width:1831px;height:1px;background:#3d3d3d;"></div><div class="a" style="left:1870px;top:942px;width:1px;height:547px;background:#3d3d3d;"></div><div class="a" style="left:1851px;top:1300px;width:14px;height:43.500px;background:linear-gradient(#3a3a3a,#4f4f4f)"></div><div class="a" style="left:1846px;top:1343.5px;width:24.5px;height:2.5px;background:#f0f0f0;"></div><svg class="a" style="left:1853px;top:1456px;" width="11" height="6" viewBox="0 0 11 6"><path d="M0 0h11L5.500 6z" fill="#a0a0a0"/></svg><svg class="a" style="left:1833px;top:1472.5px;" width="6.5" height="12" viewBox="0 0 6.5 12"><path d="M0 0v12l6.500-6z" fill="#a0a0a0"/></svg><svg class="a" style="left:48px;top:1472.5px;" width="6.5" height="12" viewBox="0 0 6.5 12"><path d="M6.500 0v12L0 6z" fill="#a0a0a0"/></svg><div class="a" style="left:62px;top:1474px;width:10px;height:9.5px;background:#4d4d4d;"></div><div class="t m" style="left:56px;top:1319px;color:#dcdcdc;"><span class="cj">复制了</span> 30 <span class="cj">个文件</span></div><div class="t m" style="left:56px;top:1337.75px;color:#dcdcdc;">Web <span class="cj">应用已成功发布</span> </div><div class="t m" style="left:208px;top:1337.75px;color:#569cd6;text-decoration:underline">file:///E:/Tg/ThingsGateway-New/src/ThingsGateway.Web.Entry/bin/Release/net6.0/publish/</div><div class="t m" style="left:56px;top:1375.25px;color:#dcdcdc;">========== <span class="cj">生成</span>: 1 <span class="cj">成功，</span>0 <span class="cj">失败，</span>12 <span class="cj">最新，</span>0 <span class="cj">已跳过</span> ==========</div><div class="t m" style="left:56px;top:1394px;color:#dcdcdc;">========== <span class="cj">生成</span> <span class="cj">于</span> 12:53 <span class="cj">完成，耗时</span> 07.867 <span class="cj">秒</span> ==========</div><div class="t m" style="left:56px;top:1412.75px;color:#dcdcdc;">========== <span class="cj">发布</span>: 1 <span class="cj">个成功，</span>0 <span class="cj">个失败，</span>0 <span class="cj">个已跳过</span> ==========</div><div class="t m" style="left:56px;top:1431.5px;color:#dcdcdc;">========== <span class="cj">发布</span> <span class="cj">于</span> 12:53 <span class="cj">完成，耗时</span> 07.867 <span class="cj">秒</span> ==========</div><div class="a" style="left:41px;top:1300px;width:1053px;height:24px;overflow:hidden"><div class="t m" style="left:15px;top:2.75px;color:#dcdcdc">E:\Tg\ThingsGateway-New\src\bin\Release\ThingsGateway.Web.Entry\net6.0\Plugins\ThingsGateway.Plugin.VariableExpression\ThingsGateway.Plugin.VariableExpression.dll</div></div><div class="a" style="left:1076px;top:1011px;width:18px;height:302px;overflow:hidden"><div class="t m" style="left:-1px;top:270.5px;color:#dcdcdc">ugi</div><div class="t m" style="left:-1px;top:251.75px;color:#dcdcdc">lug</div><div class="t m" style="left:-1px;top:233px;color:#dcdcdc">Sql</div><div class="t m" style="left:-1px;top:214.25px;color:#dcdcdc">n.S</div><div class="t m" style="left:-1px;top:195.5px;color:#dcdcdc">ati</div><div class="t m" style="left:-1px;top:176.75px;color:#dcdcdc">.n.</div><div class="t m" style="left:-1px;top:158px;color:#dcdcdc">-</div><div class="t m" style="left:-1px;top:139.25px;color:#dcdcdc">n.Q</div><div class="t m" style="left:-1px;top:120.5px;color:#dcdcdc">Opc</div><div class="t m" style="left:-1px;top:101.75px;color:#dcdcdc">.on</div><div class="t m" style="left:-1px;top:83px;color:#dcdcdc">ll</div><div class="t m" style="left:-1px;top:45.5px;color:#dcdcdc">fic</div><div class="t m" style="left:-1px;top:8px;color:#dcdcdc">dll</div></div><div class="t" style="top:1490.5px;font-size:15px;line-height:20px;left:47px;color:#c0c0c0;">测试资源管理器</div><div class="t" style="top:1490.5px;font-size:15px;line-height:20px;left:166px;color:#c0c0c0;letter-spacing:0.389px;">CodeLens</div><div class="t" style="top:1490.5px;font-size:15px;line-height:20px;left:252px;color:#c0c0c0;letter-spacing:-0.084px;">错误列表 ...</div><div class="t" style="top:1490.5px;font-size:15px;line-height:20px;left:342px;color:#c0c0c0;">任务列表</div><div class="t" style="top:1490.5px;font-size:15px;line-height:20px;left:416px;color:#c0c0c0;">命令窗口</div><div class="a" style="left:483px;top:1488.5px;width:43.5px;height:24px;background:#1f1f1f;border:1px solid #3f3f3f;border-top:none;box-sizing:border-box;"></div><div class="t" style="top:1490.5px;font-size:15px;line-height:20px;left:489.5px;color:#fff;">输出</div><div class="a" style="left:0px;top:1520px;width:2560px;height:30px;background:#424242;"></div><svg class="a" style="left:5px;top:1525.5px;" width="20.5" height="20" viewBox="0 0 20.5 20"><path d="M0.800 0.800h18.800v13.400H10l-4.500 4.500v-4.500H0.800z" fill="none" stroke="#e0e0e0" stroke-width="1.500"/></svg><div class="t" style="top:1525px;font-size:15px;line-height:20px;left:35px;color:#f0f0f0;">就绪</div><svg class="a" style="left:2033px;top:1527.5px;" width="16" height="16" viewBox="0 0 16 16"><path d="M4 16V1.200M0.800 4.500L4 1.200 7.200 4.500M12 0v14.800M8.800 11.500l3.200 3.300 3.200-3.300" fill="none" stroke="#f0f0f0" stroke-width="1.400"/></svg><div class="t" style="top:1525.5px;font-size:15px;line-height:20px;left:2058px;color:#f0f0f0;letter-spacing:0.663px;">0 / 0</div><svg class="a" style="left:2098.5px;top:1533px;" width="9" height="5" viewBox="0 0 9 5"><path d="M0 5h9L4.500 0z" fill="#f0f0f0"/></svg><svg class="a" style="left:2137.5px;top:1527.5px;" width="15.5" height="15.5" viewBox="0 0 15.5 15.5"><path d="M1 14.500l1-4L11.500 1q1.500-.8 2.500.5t0 2.500L4.800 13.500z" fill="none" stroke="#f0f0f0" stroke-width="1.300"/></svg><div class="t" style="top:1525.5px;font-size:15px;line-height:20px;left:2163px;color:#f0f0f0;">5</div><svg class="a" style="left:2201px;top:1526px;" width="18" height="19.5" viewBox="0 0 18 19.5"><circle cx="3" cy="3" r="2.200" fill="none" stroke="#f0f0f0" stroke-width="1.200"/><circle cx="3" cy="16" r="2.200" fill="none" stroke="#f0f0f0" stroke-width="1.200"/><circle cx="11" cy="4" r="2.200" fill="none" stroke="#f0f0f0" stroke-width="1.200"/><path d="M3 5.200v8.600M11 6.200q0 4-7 5.500" fill="none" stroke="#f0f0f0" stroke-width="1.200"/><circle cx="12.500" cy="14" r="4.800" fill="#6fdc6f"/><path d="M12.500 17v-5.500M10.300 13.500l2.200-2.200 2.200 2.200" fill="none" stroke="#1f3f1f" stroke-width="1.200"/></svg><div class="t" style="top:1525.5px;font-size:15px;line-height:20px;left:2226.5px;color:#f0f0f0;letter-spacing:0.938px;">dev</div><svg class="a" style="left:2260.5px;top:1533px;" width="9" height="5" viewBox="0 0 9 5"><path d="M0 5h9L4.500 0z" fill="#f0f0f0"/></svg><svg class="a" style="left:2308px;top:1526px;" width="19" height="19.5" viewBox="0 0 19 19.5"><path d="M0.700 0.700h17v3.600H0.700zM2.500 4.300V16.500h5M16 4.300V8" fill="none" stroke="#f0f0f0" stroke-width="1.300"/><path d="M6.500 7v5M9.500 7v3" stroke="#f0f0f0" stroke-width="1.200"/><circle cx="13.500" cy="14" r="4.800" fill="#6fdc6f"/><path d="M13.500 17v-5.500M11.300 13.500l2.200-2.200 2.200 2.200" fill="none" stroke="#1f3f1f" stroke-width="1.200"/></svg><div class="t" style="top:1525.5px;font-size:15px;line-height:20px;left:2334.8px;color:#f0f0f0;letter-spacing:0.546px;">ThingsGateway-New</div><svg class="a" style="left:2490.5px;top:1533px;" width="9" height="5" viewBox="0 0 9 5"><path d="M0 5h9L4.500 0z" fill="#f0f0f0"/></svg><svg class="a" style="left:2528.5px;top:1526.5px;" width="15" height="18" viewBox="0 0 15 18"><path d="M1 14q1.800-1.500 1.800-4V7q0-5.500 4.700-5.500T12.200 7v3q0 2.500 1.800 4z" fill="none" stroke="#f0f0f0" stroke-width="1.300"/><path d="M5.500 15.500q0 1.800 2 1.800t2-1.800" fill="none" stroke="#f0f0f0" stroke-width="1.300"/></svg><div class="a" style="left:0;top:403px;width:1076px;height:910px;background:#fff;overflow:hidden;box-shadow:0 1px 12px rgba(0,0,0,.5)"><div class="a" style="left:0;top:-403px;width:2560px;height:1550px"><svg class="a" style="left:8.5px;top:413.5px;" width="1" height="17" viewBox="0 0 1 17"><path d="M0.500 0v17" stroke="#9a9a9a" stroke-width="1"/></svg><svg class="a" style="left:24.5px;top:412.8px;" width="15" height="18"><use href="#ck"/></svg><svg class="a" style="left:50.8px;top:413px;" width="12" height="17.4"><use href="#fo"/></svg><svg class="a" style="left:75.5px;top:419px;" width="8" height="7" viewBox="0 0 8 7"><path d="M0.500 0h7M0.800 2.500h6.400L4 6.200z" fill="#222" stroke="#222" stroke-width=".8"/></svg><svg class="a" style="left:96px;top:413.5px;" width="1" height="17" viewBox="0 0 1 17"><path d="M0.500 0v17" stroke="#9a9a9a" stroke-width="1"/></svg><div class="t" style="top:411.5px;font-size:15px;line-height:20px;left:104.2px;color:#8e8e8e;letter-spacing:0.683px;">net6.0</div><svg class="a" style="left:923px;top:419.5px;" width="13" height="2" viewBox="0 0 13 2"><path d="M0 1h13" stroke="#9a9a9a" stroke-width="1"/></svg><svg class="a" style="left:980.5px;top:414.5px;" width="13" height="13" viewBox="0 0 13 13"><rect x=".5" y=".5" width="12" height="12" fill="none" stroke="#9a9a9a" stroke-width="1"/></svg><svg class="a" style="left:1039.5px;top:414.5px;" width="13" height="13" viewBox="0 0 13 13"><path d="M0.500 0.500l12 12M12.500 0.500l-12 12" stroke="#9a9a9a" stroke-width="1"/></svg><div class="a" style="left:-25px;top:440px;width:70px;height:28px;background:#0063b1;"></div><div class="t" style="top:445px;font-size:15px;line-height:20px;left:-5px;color:#fff;">文件</div><div class="t" style="top:445px;font-size:15px;line-height:20px;left:61.8px;">主页</div><div class="t" style="top:445px;font-size:15px;line-height:20px;left:126.7px;">共享</div><div class="t" style="top:445px;font-size:15px;line-height:20px;left:191.7px;">查看</div><svg class="a" style="left:1031px;top:451.5px;" width="13" height="8" viewBox="0 0 13 8"><path d="M0.800 0.800L6.500 6.500 12.200 0.800" fill="none" stroke="#8a8a8a" stroke-width="1.200"/></svg><svg class="a" style="left:1053px;top:444.5px;" width="21" height="21" viewBox="0 0 21 21"><circle cx="10.500" cy="10.500" r="10" fill="#0f6cc7"/><text x="10.500" y="15.500" text-anchor="middle" font-family="Liberation Sans" font-weight="bold" font-size="14" fill="#fff">?</text></svg><div class="a" style="left:0px;top:471px;width:1076px;height:1px;background:#dadbdc;"></div><svg class="a" style="left:-10px;top:487.5px;" width="17" height="12" viewBox="0 0 17 12"><path d="M6.500 0.800L1.200 6l5.300 5.200M1.200 6H16" fill="none" stroke="#5a5a5a" stroke-width="1.900"/></svg><svg class="a" style="left:29.5px;top:487.5px;" width="17" height="12" viewBox="0 0 17 12"><path d="M10.500 0.800L15.800 6l-5.300 5.200M15.800 6H1" fill="none" stroke="#c9c9c9" stroke-width="1.500"/></svg><svg class="a" style="left:63px;top:491px;" width="10" height="7" viewBox="0 0 10 7"><path d="M1 1l4 4 4-4" fill="none" stroke="#6a6a6a" stroke-width="1.400"/></svg><svg class="a" style="left:86.5px;top:486px;" width="13" height="16" viewBox="0 0 13 16"><path d="M6.500 1.200V16M1 6.700L6.500 1.200 12 6.700" fill="none" stroke="#5a5a5a" stroke-width="1.900"/></svg><div class="a" style="left:109px;top:479px;width:646px;height:28px;background:#fff;border:1px solid #d9d9d9;box-sizing:border-box;"></div><svg class="a" style="left:115px;top:484.3px;" width="12" height="17.4"><use href="#fo"/></svg><div class="t" style="top:482px;font-size:14px;line-height:20px;left:139px;color:#444;">«</div><div class="t" style="top:482.5px;font-size:15px;line-height:20px;left:157px;letter-spacing:0.335px;">src</div><svg class="a" style="left:188.8px;top:488.5px;" width="7" height="10" viewBox="0 0 7 10"><path d="M1.200 1l4 4-4 4" fill="none" stroke="#808080" stroke-width="1.300"/></svg><div class="t" style="top:482.5px;font-size:15px;line-height:20px;left:205px;letter-spacing:0.827px;">bin</div><svg class="a" style="left:239px;top:488.5px;" width="7" height="10" viewBox="0 0 7 10"><path d="M1.200 1l4 4-4 4" fill="none" stroke="#808080" stroke-width="1.300"/></svg><div class="t" style="top:482.5px;font-size:15px;line-height:20px;left:255px;letter-spacing:-0.005px;">Release</div><svg class="a" style="left:322px;top:488.5px;" width="7" height="10" viewBox="0 0 7 10"><path d="M1.200 1l4 4-4 4" fill="none" stroke="#808080" stroke-width="1.300"/></svg><div class="t" style="top:482.5px;font-size:15px;line-height:20px;left:338.4px;letter-spacing:0.435px;">ThingsGateway.Web.Entry</div><svg class="a" style="left:538px;top:488.5px;" width="7" height="10" viewBox="0 0 7 10"><path d="M1.200 1l4 4-4 4" fill="none" stroke="#808080" stroke-width="1.300"/></svg><div class="t" style="top:482.5px;font-size:15px;line-height:20px;left:554px;letter-spacing:0.716px;">net6.0</div><svg class="a" style="left:713px;top:490.5px;" width="12" height="8" viewBox="0 0 12 8"><path d="M1 1l5 5 5-5" fill="none" stroke="#444" stroke-width="1.500"/></svg><div class="a" style="left:730px;top:479px;width:1px;height:28px;background:#d9d9d9;"></div><svg class="a" style="left:735.5px;top:485.5px;" width="15" height="16" viewBox="0 0 15 16"><path d="M9.800 2.300A6 6 0 1 0 13.200 6" fill="none" stroke="#5a5a5a" stroke-width="1.500"/><path d="M7.300 0.300h3.500v3.500" fill="none" stroke="#5a5a5a" stroke-width="1.500"/></svg><div class="a" style="left:767px;top:479px;width:297px;height:28px;background:#fff;border:1px solid #d9d9d9;box-sizing:border-box;"></div><div class="t" style="top:483.5px;font-size:15px;line-height:20px;left:777px;color:#6d6d6d;letter-spacing:0.330px;">在 net6.0 中搜索</div><svg class="a" style="left:1038px;top:486.5px;" width="14" height="14" viewBox="0 0 14 14"><circle cx="8.500" cy="5.500" r="4.300" fill="none" stroke="#5a5a5a" stroke-width="1.400"/><path d="M5.500 8.500L0.800 13.200" stroke="#5a5a5a" stroke-width="1.600"/></svg><div class="a" style="left:273px;top:516px;width:1px;height:797px;background:#ececec;"></div><svg class="a" style="left:7px;top:542.8px;" width="18" height="16"><use href="#st"/></svg><div class="t" style="top:541.5px;font-size:15px;line-height:20px;left:30.5px;">快速访问</div><svg class="a" style="left:16px;top:573.8px;" width="18" height="14"><use href="#dk"/></svg><div class="t" style="top:571.5px;font-size:15px;line-height:20px;left:40px;">桌面</div><svg class="a" style="left:254.5px;top:574px;" width="13" height="13"><use href="#pn"/></svg><svg class="a" style="left:17px;top:602.3px;" width="16" height="17"><use href="#dw"/></svg><div class="t" style="top:601.5px;font-size:15px;line-height:20px;left:40px;">下载</div><svg class="a" style="left:254.5px;top:604px;" width="13" height="13"><use href="#pn"/></svg><svg class="a" style="left:18px;top:631.8px;" width="14" height="18"><use href="#dc"/></svg><div class="t" style="top:631.5px;font-size:15px;line-height:20px;left:40px;">文档</div><svg class="a" style="left:254.5px;top:634px;" width="13" height="13"><use href="#pn"/></svg><svg class="a" style="left:16px;top:663.8px;" width="18" height="14"><use href="#pc"/></svg><div class="t" style="top:661.5px;font-size:15px;line-height:20px;left:40px;">图片</div><svg class="a" style="left:254.5px;top:664px;" width="13" height="13"><use href="#pn"/></svg><svg class="a" style="left:18px;top:692.1px;" width="12" height="17.4"><use href="#fo"/></svg><div class="t" style="top:691.5px;font-size:15px;line-height:20px;left:40px;letter-spacing:0.500px;">docs</div><svg class="a" style="left:18px;top:722.1px;" width="12" height="17.4"><use href="#fo"/></svg><div class="t" style="top:721.5px;font-size:15px;line-height:20px;left:40px;letter-spacing:0.500px;">src</div><svg class="a" style="left:18px;top:752.1px;" width="12" height="17.4"><use href="#fo"/></svg><div class="t" style="top:751.5px;font-size:15px;line-height:20px;left:40px;letter-spacing:0.500px;">src</div><svg class="a" style="left:18px;top:782.1px;" width="12" height="17.4"><use href="#fo"/></svg><div class="a" style="left:40px;top:779.5px;width:230px;height:24px;overflow:hidden"><div class="t" style="top:2px;font-size:15px;line-height:20px;left:0px;letter-spacing:0.620px;">ThingsGateway.Plugin.FBModbus</div></div><svg class="a" style="left:6px;top:822.8px;" width="20" height="16"><use href="#tp"/></svg><div class="t" style="top:821.5px;font-size:15px;line-height:20px;left:30.5px;">此电脑</div><svg class="a" style="left:16px;top:851.8px;" width="18" height="18"><use href="#cb"/></svg><div class="t" style="top:851.5px;font-size:15px;line-height:20px;left:40px;letter-spacing:0.031px;">3D 对象</div><svg class="a" style="left:16px;top:881.3px;" width="18" height="19"><use href="#vd"/></svg><div class="t" style="top:881.5px;font-size:15px;line-height:20px;left:40px;">视频</div><svg class="a" style="left:16px;top:913.8px;" width="18" height="14"><use href="#pc"/></svg><div class="t" style="top:911.5px;font-size:15px;line-height:20px;left:40px;">图片</div><svg class="a" style="left:18px;top:941.8px;" width="14" height="18"><use href="#dc"/></svg><div class="t" style="top:941.5px;font-size:15px;line-height:20px;left:40px;">文档</div><svg class="a" style="left:17px;top:972.3px;" width="16" height="17"><use href="#dw"/></svg><div class="t" style="top:971.5px;font-size:15px;line-height:20px;left:40px;">下载</div><svg class="a" style="left:19px;top:1001.8px;" width="12" height="18"><use href="#mu"/></svg><div class="t" style="top:1001.5px;font-size:15px;line-height:20px;left:40px;">音乐</div><svg class="a" style="left:16px;top:1033.8px;" width="18" height="14"><use href="#dk"/></svg><div class="t" style="top:1031.5px;font-size:15px;line-height:20px;left:40px;">桌面</div><svg class="a" style="left:16px;top:1070px;" width="18" height="9.5"><use href="#dr"/></svg><svg class="a" style="left:14.5px;top:1065px;" width="9" height="9"><use href="#wl"/></svg><div class="t" style="top:1061.5px;font-size:15px;line-height:20px;left:40px;letter-spacing:-0.223px;">系统 (C:)</div><svg class="a" style="left:16px;top:1100px;" width="18" height="9.5"><use href="#dr"/></svg><div class="t" style="top:1091.5px;font-size:15px;line-height:20px;left:40px;letter-spacing:-0.166px;">软件 (D:)</div><div class="a" style="left:-25px;top:1116px;width:296px;height:30px;background:#d9d9d9;"></div><svg class="a" style="left:16px;top:1130px;" width="18" height="9.5"><use href="#dr"/></svg><div class="t" style="top:1121.5px;font-size:15px;line-height:20px;left:40px;letter-spacing:-0.404px;">文档 (E:)</div><svg class="a" style="left:6px;top:1161.8px;" width="20" height="18"><use href="#nw"/></svg><div class="t" style="top:1161.5px;font-size:15px;line-height:20px;left:30.5px;">网络</div><div class="t" style="top:523px;font-size:15px;line-height:20px;left:296.8px;color:#4c607a;">名称</div><div class="t" style="top:523px;font-size:15px;line-height:20px;left:623px;color:#4c607a;">修改日期</div><div class="t" style="top:523px;font-size:15px;line-height:20px;left:803px;color:#4c607a;">类型</div><div class="t" style="top:523px;font-size:15px;line-height:20px;left:952.8px;color:#4c607a;">大小</div><div class="a" style="left:615px;top:516px;width:1px;height:32px;background:#e5e5e5;"></div><div class="a" style="left:795px;top:516px;width:1px;height:32px;background:#e5e5e5;"></div><div class="a" style="left:945px;top:516px;width:1px;height:32px;background:#e5e5e5;"></div><div class="a" style="left:1045px;top:516px;width:1px;height:32px;background:#e5e5e5;"></div><svg class="a" style="left:448px;top:517px;" width="10" height="6" viewBox="0 0 10 6"><path d="M0.800 5l4.200-4 4.200 4" fill="none" stroke="#8a8a8a" stroke-width="1"/></svg><svg class="a" style="left:302px;top:560.9px;" width="12" height="17.4"><use href="#fo"/></svg><div class="t" style="top:560.6px;font-size:15px;line-height:20px;left:324px;letter-spacing:0.690px;">Config</div><div class="t" style="top:560.6px;font-size:15px;line-height:20px;left:623px;color:#6d6d6d;letter-spacing:0.604px;">2024/1/21 12:51</div><div class="t" style="top:560.6px;font-size:15px;line-height:20px;left:803px;color:#6d6d6d;">文件夹</div><svg class="a" style="left:302px;top:587.9px;" width="12" height="17.4"><use href="#fo"/></svg><div class="t" style="top:587.6px;font-size:15px;line-height:20px;left:324px;letter-spacing:0.500px;">cs</div><div class="t" style="top:587.6px;font-size:15px;line-height:20px;left:623px;color:#6d6d6d;letter-spacing:0.604px;">2024/1/21 12:51</div><div class="t" style="top:587.6px;font-size:15px;line-height:20px;left:803px;color:#6d6d6d;">文件夹</div><svg class="a" style="left:302px;top:614.9px;" width="12" height="17.4"><use href="#fo"/></svg><div class="t" style="top:614.6px;font-size:15px;line-height:20px;left:324px;letter-spacing:0.500px;">de</div><div class="t" style="top:614.6px;font-size:15px;line-height:20px;left:623px;color:#6d6d6d;letter-spacing:0.604px;">2024/1/21 12:51</div><div class="t" style="top:614.6px;font-size:15px;line-height:20px;left:803px;color:#6d6d6d;">文件夹</div><svg class="a" style="left:302px;top:641.9px;" width="12" height="17.4"><use href="#fo"/></svg><div class="t" style="top:641.6px;font-size:15px;line-height:20px;left:324px;letter-spacing:0.500px;">es</div><div class="t" style="top:641.6px;font-size:15px;line-height:20px;left:623px;color:#6d6d6d;letter-spacing:0.604px;">2024/1/21 12:51</div><div class="t" style="top:641.6px;font-size:15px;line-height:20px;left:803px;color:#6d6d6d;">文件夹</div><svg class="a" style="left:302px;top:668.9px;" width="12" height="17.4"><use href="#fo"/></svg><div class="t" style="top:668.6px;font-size:15px;line-height:20px;left:324px;letter-spacing:0.500px;">fr</div><div class="t" style="top:668.6px;font-size:15px;line-height:20px;left:623px;color:#6d6d6d;letter-spacing:0.604px;">2024/1/21 12:51</div><div class="t" style="top:668.6px;font-size:15px;line-height:20px;left:803px;color:#6d6d6d;">文件夹</div><svg class="a" style="left:302px;top:695.9px;" width="12" height="17.4"><use href="#fo"/></svg><div class="t" style="top:695.6px;font-size:15px;line-height:20px;left:324px;letter-spacing:0.500px;">it</div><div class="t" style="top:695.6px;font-size:15px;line-height:20px;left:623px;color:#6d6d6d;letter-spacing:0.604px;">2024/1/21 12:51</div><div class="t" style="top:695.6px;font-size:15px;line-height:20px;left:803px;color:#6d6d6d;">文件夹</div><svg class="a" style="left:302px;top:722.9px;" width="12" height="17.4"><use href="#fo"/></svg><div class="t" style="top:722.6px;font-size:15px;line-height:20px;left:324px;letter-spacing:0.500px;">ja</div><div class="t" style="top:722.6px;font-size:15px;line-height:20px;left:623px;color:#6d6d6d;letter-spacing:0.604px;">2024/1/21 12:51</div><div class="t" style="top:722.6px;font-size:15px;line-height:20px;left:803px;color:#6d6d6d;">文件夹</div><svg class="a" style="left:302px;top:749.9px;" width="12" height="17.4"><use href="#fo"/></svg><div class="t" style="top:749.6px;font-size:15px;line-height:20px;left:324px;letter-spacing:0.500px;">ko</div><div class="t" style="top:749.6px;font-size:15px;line-height:20px;left:623px;color:#6d6d6d;letter-spacing:0.604px;">2024/1/21 12:51</div><div class="t" style="top:749.6px;font-size:15px;line-height:20px;left:803px;color:#6d6d6d;">文件夹</div><svg class="a" style="left:302px;top:776.9px;" width="12" height="17.4"><use href="#fo"/></svg><div class="t" style="top:776.6px;font-size:15px;line-height:20px;left:324px;letter-spacing:0.500px;">pl</div><div class="t" style="top:776.6px;font-size:15px;line-height:20px;left:623px;color:#6d6d6d;letter-spacing:0.604px;">2024/1/21 12:51</div><div class="t" style="top:776.6px;font-size:15px;line-height:20px;left:803px;color:#6d6d6d;">文件夹</div><div class="a" style="left:296px;top:799px;width:745px;height:27.5px;background:#d9d9d9;"></div><svg class="a" style="left:302px;top:803.9px;" width="12" height="17.4"><use href="#fo"/></svg><div class="t" style="top:803.6px;font-size:15px;line-height:20px;left:324px;letter-spacing:0.329px;">Plugins</div><div class="t" style="top:803.6px;font-size:15px;line-height:20px;left:623px;color:#6d6d6d;letter-spacing:0.604px;">2024/1/21 12:53</div><div class="t" style="top:803.6px;font-size:15px;line-height:20px;left:803px;color:#6d6d6d;">文件夹</div><svg class="a" style="left:302px;top:830.9px;" width="12" height="17.4"><use href="#fo"/></svg><div class="t" style="top:830.6px;font-size:15px;line-height:20px;left:324px;letter-spacing:0.431px;">pt-BR</div><div class="t" style="top:830.6px;font-size:15px;line-height:20px;left:623px;color:#6d6d6d;letter-spacing:0.604px;">2024/1/21 12:51</div><div class="t" style="top:830.6px;font-size:15px;line-height:20px;left:803px;color:#6d6d6d;">文件夹</div><svg class="a" style="left:302px;top:857.9px;" width="12" height="17.4"><use href="#fo"/></svg><div class="t" style="top:857.6px;font-size:15px;line-height:20px;left:324px;letter-spacing:0.500px;">ru</div><div class="t" style="top:857.6px;font-size:15px;line-height:20px;left:623px;color:#6d6d6d;letter-spacing:0.604px;">2024/1/21 12:51</div><div class="t" style="top:857.6px;font-size:15px;line-height:20px;left:803px;color:#6d6d6d;">文件夹</div><svg class="a" style="left:302px;top:884.9px;" width="12" height="17.4"><use href="#fo"/></svg><div class="t" style="top:884.6px;font-size:15px;line-height:20px;left:324px;letter-spacing:0.748px;">runtimes</div><div class="t" style="top:884.6px;font-size:15px;line-height:20px;left:623px;color:#6d6d6d;letter-spacing:0.604px;">2024/1/21 12:51</div><div class="t" style="top:884.6px;font-size:15px;line-height:20px;left:803px;color:#6d6d6d;">文件夹</div><svg class="a" style="left:302px;top:911.9px;" width="12" height="17.4"><use href="#fo"/></svg><div class="t" style="top:911.6px;font-size:15px;line-height:20px;left:324px;letter-spacing:0.348px;">SeedData</div><div class="t" style="top:911.6px;font-size:15px;line-height:20px;left:623px;color:#6d6d6d;letter-spacing:0.604px;">2024/1/21 12:51</div><div class="t" style="top:911.6px;font-size:15px;line-height:20px;left:803px;color:#6d6d6d;">文件夹</div><svg class="a" style="left:302px;top:938.9px;" width="12" height="17.4"><use href="#fo"/></svg><div class="t" style="top:938.6px;font-size:15px;line-height:20px;left:324px;letter-spacing:0.500px;">tr</div><div class="t" style="top:938.6px;font-size:15px;line-height:20px;left:623px;color:#6d6d6d;letter-spacing:0.604px;">2024/1/21 12:51</div><div class="t" style="top:938.6px;font-size:15px;line-height:20px;left:803px;color:#6d6d6d;">文件夹</div><svg class="a" style="left:302px;top:965.9px;" width="12" height="17.4"><use href="#fo"/></svg><div class="t" style="top:965.6px;font-size:15px;line-height:20px;left:324px;letter-spacing:0.759px;">win-x64</div><div class="t" style="top:965.6px;font-size:15px;line-height:20px;left:623px;color:#6d6d6d;letter-spacing:0.604px;">2024/1/21 12:53</div><div class="t" style="top:965.6px;font-size:15px;line-height:20px;left:803px;color:#6d6d6d;">文件夹</div><svg class="a" style="left:302px;top:992.9px;" width="12" height="17.4"><use href="#fo"/></svg><div class="t" style="top:992.6px;font-size:15px;line-height:20px;left:324px;letter-spacing:1.308px;">wwwroot</div><div class="t" style="top:992.6px;font-size:15px;line-height:20px;left:623px;color:#6d6d6d;letter-spacing:0.604px;">2024/1/21 12:51</div><div class="t" style="top:992.6px;font-size:15px;line-height:20px;left:803px;color:#6d6d6d;">文件夹</div><svg class="a" style="left:302px;top:1019.9px;" width="12" height="17.4"><use href="#fo"/></svg><div class="t" style="top:1019.6px;font-size:15px;line-height:20px;left:324px;letter-spacing:0.235px;">zh-Hans</div><div class="t" style="top:1019.6px;font-size:15px;line-height:20px;left:623px;color:#6d6d6d;letter-spacing:0.604px;">2024/1/21 12:51</div><div class="t" style="top:1019.6px;font-size:15px;line-height:20px;left:803px;color:#6d6d6d;">文件夹</div><svg class="a" style="left:302px;top:1046.9px;" width="12" height="17.4"><use href="#fo"/></svg><div class="t" style="top:1046.6px;font-size:15px;line-height:20px;left:324px;letter-spacing:0.582px;">zh-Hant</div><div class="t" style="top:1046.6px;font-size:15px;line-height:20px;left:623px;color:#6d6d6d;letter-spacing:0.604px;">2024/1/21 12:51</div><div class="t" style="top:1046.6px;font-size:15px;line-height:20px;left:803px;color:#6d6d6d;">文件夹</div><svg class="a" style="left:300px;top:1073.2px;" width="18" height="18"><use href="#js"/></svg><div class="t" style="top:1073.6px;font-size:15px;line-height:20px;left:324px;letter-spacing:0.751px;">appsettings.Development.json</div><div class="t" style="top:1073.6px;font-size:15px;line-height:20px;left:623px;color:#6d6d6d;letter-spacing:0.620px;">2024/1/19 9:37</div><div class="t" style="top:1073.6px;font-size:15px;line-height:20px;left:803px;color:#6d6d6d;letter-spacing:-0.038px;">JSON File</div><div class="t" style="top:1073.6px;font-size:15px;line-height:20px;right:1524.35px;color:#6d6d6d;letter-spacing:0.150px;">1 KB</div><svg class="a" style="left:300px;top:1100.2px;" width="18" height="18"><use href="#js"/></svg><div class="t" style="top:1100.6px;font-size:15px;line-height:20px;left:324px;letter-spacing:0.662px;">appsettings.json</div><div class="t" style="top:1100.6px;font-size:15px;line-height:20px;left:623px;color:#6d6d6d;letter-spacing:0.620px;">2024/1/19 9:37</div><div class="t" style="top:1100.6px;font-size:15px;line-height:20px;left:803px;color:#6d6d6d;letter-spacing:-0.038px;">JSON File</div><div class="t" style="top:1100.6px;font-size:15px;line-height:20px;right:1524.35px;color:#6d6d6d;letter-spacing:0.150px;">1 KB</div><svg class="a" style="left:301.5px;top:1127.2px;" width="14.5" height="18"><use href="#dl"/></svg><div class="t" style="top:1127.6px;font-size:15px;line-height:20px;left:324px;letter-spacing:0.516px;">BemIt.dll</div><div class="t" style="top:1127.6px;font-size:15px;line-height:20px;left:623px;color:#6d6d6d;letter-spacing:0.620px;">2023/8/4 15:47</div><div class="t" style="top:1127.6px;font-size:15px;line-height:20px;left:803px;color:#6d6d6d;">应用程序扩展</div><div class="t" style="top:1127.6px;font-size:15px;line-height:20px;right:1524.35px;color:#6d6d6d;letter-spacing:0.150px;">10 KB</div><svg class="a" style="left:301.5px;top:1154.2px;" width="14.5" height="18"><use href="#dl"/></svg><div class="t" style="top:1154.6px;font-size:15px;line-height:20px;left:324px;letter-spacing:0.577px;">Ben.Demystifier.dll</div><div class="t" style="top:1154.6px;font-size:15px;line-height:20px;left:623px;color:#6d6d6d;letter-spacing:0.620px;">2021/4/23 8:57</div><div class="t" style="top:1154.6px;font-size:15px;line-height:20px;left:803px;color:#6d6d6d;">应用程序扩展</div><div class="t" style="top:1154.6px;font-size:15px;line-height:20px;right:1524.35px;color:#6d6d6d;letter-spacing:0.150px;">58 KB</div><svg class="a" style="left:301.5px;top:1181.2px;" width="14.5" height="18"><use href="#dl"/></svg><div class="t" style="top:1181.6px;font-size:15px;line-height:20px;left:324px;letter-spacing:0.724px;">BlazorComponent.dll</div><div class="t" style="top:1181.6px;font-size:15px;line-height:20px;left:623px;color:#6d6d6d;letter-spacing:0.620px;">2024/1/9 10:08</div><div class="t" style="top:1181.6px;font-size:15px;line-height:20px;left:803px;color:#6d6d6d;">应用程序扩展</div><div class="t" style="top:1181.6px;font-size:15px;line-height:20px;right:1524.35px;color:#6d6d6d;letter-spacing:0.150px;">1,056 KB</div><svg class="a" style="left:301.5px;top:1208.2px;" width="14.5" height="18"><use href="#dl"/></svg><div class="t" style="top:1208.6px;font-size:15px;line-height:20px;left:324px;letter-spacing:0.562px;">BouncyCastle.Crypto.dll</div><div class="t" style="top:1208.6px;font-size:15px;line-height:20px;left:623px;color:#6d6d6d;letter-spacing:0.620px;">2021/10/19 19:53</div><div class="t" style="top:1208.6px;font-size:15px;line-height:20px;left:803px;color:#6d6d6d;">应用程序扩展</div><div class="t" style="top:1208.6px;font-size:15px;line-height:20px;right:1524.35px;color:#6d6d6d;letter-spacing:0.150px;">3,241 KB</div><svg class="a" style="left:301.5px;top:1235.2px;" width="14.5" height="18"><use href="#dl"/></svg><div class="t" style="top:1235.6px;font-size:15px;line-height:20px;left:324px;letter-spacing:0.480px;">CodingSeb.ExpressionEvaluator.dll</div><div class="t" style="top:1235.6px;font-size:15px;line-height:20px;left:623px;color:#6d6d6d;letter-spacing:0.604px;">2023/9/22 16:09</div><div class="t" style="top:1235.6px;font-size:15px;line-height:20px;left:803px;color:#6d6d6d;">应用程序扩展</div><div class="t" style="top:1235.6px;font-size:15px;line-height:20px;right:1524.35px;color:#6d6d6d;letter-spacing:0.150px;">132 KB</div><svg class="a" style="left:301.5px;top:1262.2px;" width="14.5" height="18"><use href="#dl"/></svg><div class="t" style="top:1262.6px;font-size:15px;line-height:20px;left:324px;"></div><div class="a" style="left:1056px;top:516px;width:18.5px;height:746.5px;background:#f0f0f0;"></div><div class="a" style="left:1056px;top:537px;width:18.5px;height:90.5px;background:#cdcdcd;"></div><svg class="a" style="left:1060px;top:523px;" width="11" height="7" viewBox="0 0 11 7"><path d="M1 6l4.500-4.500L10 6" fill="none" stroke="#505050" stroke-width="1.600"/></svg><svg class="a" style="left:1060px;top:1248.5px;" width="11" height="7" viewBox="0 0 11 7"><path d="M1 1l4.500 4.500L10 1" fill="none" stroke="#505050" stroke-width="1.600"/></svg><div class="a" style="left:276px;top:1263.5px;width:779px;height:20px;background:#f0f0f0;"></div><div class="a" style="left:297px;top:1263.5px;width:733px;height:20px;background:#cdcdcd;"></div><svg class="a" style="left:282.5px;top:1268px;" width="7" height="11" viewBox="0 0 7 11"><path d="M6 1L1.500 5.500 6 10" fill="none" stroke="#505050" stroke-width="1.600"/></svg><svg class="a" style="left:1041px;top:1268px;" width="7" height="11" viewBox="0 0 7 11"><path d="M1 1l4.500 4.500L1 10" fill="none" stroke="#505050" stroke-width="1.600"/></svg><div class="a" style="left:0px;top:1284px;width:1076px;height:29px;background:#fff;"></div><div class="t" style="top:1288.8px;font-size:15px;line-height:20px;left:-7.5px;color:#1e3287;letter-spacing:0.400px;">103 个项目</div><div class="t" style="top:1288.8px;font-size:15px;line-height:20px;left:93px;color:#1e3287;letter-spacing:0.400px;">选中 1 个项目</div><div class="a" style="left:80px;top:1289px;width:1px;height:20px;background:#eaeaea;"></div><div class="a" style="left:197px;top:1289px;width:1px;height:20px;background:#eaeaea;"></div><div class="a" style="left:1015px;top:1284px;width:28px;height:28.5px;background:#cce8ff;border:1px solid #99d1ff;box-sizing:border-box;"></div><svg class="a" style="left:1020.5px;top:1291px;" width="18" height="14" viewBox="0 0 18 14"><path d="M0.500 0.500h3v3h-3zM0.500 5.500h3v3h-3zM0.500 10.500h3v3h-3z" fill="#fff" stroke="#6a6a6a" stroke-width=".8"/><path d="M6 2h5M12.500 2h5M6 7h5M12.500 7h5M6 12h5M12.500 12h5" stroke="#5a5a5a" stroke-width="1.100"/><rect x="1.500" y="11.500" width="1.200" height="1.200" fill="#d63a1a"/></svg><svg class="a" style="left:1048px;top:1291.5px;" width="18" height="14"><use href="#pc"/></svg><div class="a" style="left:292px;top:794px;width:125px;height:40.5px;border:3px solid #ee3b3b;box-sizing:border-box;"></div><div class="t" style="top:798px;font-size:20px;line-height:26px;left:446px;color:#ee3b3b;">插件文件夹</div></div></div><div class="a" style="left:1094px;top:388px;width:1466px;height:936px;background:#fff;overflow:hidden;box-shadow:0 1px 12px rgba(0,0,0,.5)"><div class="a" style="left:-1094px;top:-388px;width:2560px;height:1550px"><svg class="a" style="left:1106px;top:399px;" width="12" height="17.4"><use href="#fo"/></svg><svg class="a" style="left:1128.5px;top:399.5px;" width="1" height="17" viewBox="0 0 1 17"><path d="M0.500 0v17" stroke="#9a9a9a" stroke-width="1"/></svg><svg class="a" style="left:1144.5px;top:398.8px;" width="15" height="18"><use href="#ck"/></svg><svg class="a" style="left:1170.8px;top:399px;" width="12" height="17.4"><use href="#fo"/></svg><svg class="a" style="left:1195.5px;top:405px;" width="8" height="7" viewBox="0 0 8 7"><path d="M0.500 0h7M0.800 2.500h6.400L4 6.200z" fill="#222" stroke="#222" stroke-width=".8"/></svg><svg class="a" style="left:1216px;top:399.5px;" width="1" height="17" viewBox="0 0 1 17"><path d="M0.500 0v17" stroke="#9a9a9a" stroke-width="1"/></svg><div class="t" style="top:397.5px;font-size:15px;line-height:20px;left:1224.2px;color:#000;letter-spacing:0.709px;">publish</div><svg class="a" style="left:2518.5px;top:405.5px;" width="13" height="2" viewBox="0 0 13 2"><path d="M0 1h13" stroke="#222" stroke-width="1"/></svg><div class="a" style="left:1095px;top:426px;width:70px;height:28px;background:#0063b1;"></div><div class="t" style="top:431px;font-size:15px;line-height:20px;left:1115px;color:#fff;">文件</div><div class="t" style="top:431px;font-size:15px;line-height:20px;left:1181.8px;">主页</div><div class="t" style="top:431px;font-size:15px;line-height:20px;left:1246.7px;">共享</div><div class="t" style="top:431px;font-size:15px;line-height:20px;left:1311.7px;">查看</div><div class="a" style="left:1094px;top:457px;width:1466px;height:1px;background:#dadbdc;"></div><svg class="a" style="left:1110px;top:473.5px;" width="17" height="12" viewBox="0 0 17 12"><path d="M6.500 0.800L1.200 6l5.300 5.200M1.200 6H16" fill="none" stroke="#5a5a5a" stroke-width="1.900"/></svg><svg class="a" style="left:1149.5px;top:473.5px;" width="17" height="12" viewBox="0 0 17 12"><path d="M10.500 0.800L15.800 6l-5.300 5.200M15.800 6H1" fill="none" stroke="#c9c9c9" stroke-width="1.500"/></svg><svg class="a" style="left:1183px;top:477px;" width="10" height="7" viewBox="0 0 10 7"><path d="M1 1l4 4 4-4" fill="none" stroke="#6a6a6a" stroke-width="1.400"/></svg><svg class="a" style="left:1206.5px;top:472px;" width="13" height="16" viewBox="0 0 13 16"><path d="M6.500 1.200V16M1 6.700L6.500 1.200 12 6.700" fill="none" stroke="#5a5a5a" stroke-width="1.900"/></svg><div class="a" style="left:1229px;top:465px;width:745px;height:28px;background:#fff;border:1px solid #d9d9d9;box-sizing:border-box;"></div><svg class="a" style="left:1235px;top:470.3px;" width="12" height="17.4"><use href="#fo"/></svg><div class="t" style="top:468px;font-size:14px;line-height:20px;left:1259px;color:#444;">«</div><div class="t" style="top:468.5px;font-size:15px;line-height:20px;left:1277px;letter-spacing:0.335px;">src</div><svg class="a" style="left:1308.8px;top:474.5px;" width="7" height="10" viewBox="0 0 7 10"><path d="M1.200 1l4 4-4 4" fill="none" stroke="#808080" stroke-width="1.300"/></svg><div class="t" style="top:468.5px;font-size:15px;line-height:20px;left:1325px;letter-spacing:0.435px;">ThingsGateway.Web.Entry</div><svg class="a" style="left:1525px;top:474.5px;" width="7" height="10" viewBox="0 0 7 10"><path d="M1.200 1l4 4-4 4" fill="none" stroke="#808080" stroke-width="1.300"/></svg><div class="t" style="top:468.5px;font-size:15px;line-height:20px;left:1541px;letter-spacing:0.827px;">bin</div><svg class="a" style="left:1575px;top:474.5px;" width="7" height="10" viewBox="0 0 7 10"><path d="M1.200 1l4 4-4 4" fill="none" stroke="#808080" stroke-width="1.300"/></svg><div class="t" style="top:468.5px;font-size:15px;line-height:20px;left:1591px;letter-spacing:-0.005px;">Release</div><svg class="a" style="left:1657.5px;top:474.5px;" width="7" height="10" viewBox="0 0 7 10"><path d="M1.200 1l4 4-4 4" fill="none" stroke="#808080" stroke-width="1.300"/></svg><div class="t" style="top:468.5px;font-size:15px;line-height:20px;left:1674px;letter-spacing:0.716px;">net6.0</div><svg class="a" style="left:1730.5px;top:474.5px;" width="7" height="10" viewBox="0 0 7 10"><path d="M1.200 1l4 4-4 4" fill="none" stroke="#808080" stroke-width="1.300"/></svg><div class="t" style="top:468.5px;font-size:15px;line-height:20px;left:1747.5px;letter-spacing:0.638px;">publish</div><svg class="a" style="left:1932px;top:476.5px;" width="12" height="8" viewBox="0 0 12 8"><path d="M1 1l5 5 5-5" fill="none" stroke="#444" stroke-width="1.500"/></svg><div class="a" style="left:1949px;top:465px;width:1px;height:28px;background:#d9d9d9;"></div><svg class="a" style="left:1954.5px;top:471.5px;" width="15" height="16" viewBox="0 0 15 16"><path d="M9.800 2.300A6 6 0 1 0 13.200 6" fill="none" stroke="#5a5a5a" stroke-width="1.500"/><path d="M7.300 0.300h3.500v3.500" fill="none" stroke="#5a5a5a" stroke-width="1.500"/></svg><div class="a" style="left:1986px;top:465px;width:614px;height:28px;background:#fff;border:1px solid #d9d9d9;box-sizing:border-box;"></div><div class="t" style="top:469.5px;font-size:15px;line-height:20px;left:1996px;color:#6d6d6d;letter-spacing:0.395px;">在 publish 中搜索</div><div class="a" style="left:1393px;top:502px;width:1px;height:793px;background:#ececec;"></div><svg class="a" style="left:1127px;top:528.8px;" width="18" height="16"><use href="#st"/></svg><div class="t" style="top:527.5px;font-size:15px;line-height:20px;left:1150.5px;">快速访问</div><svg class="a" style="left:1136px;top:559.8px;" width="18" height="14"><use href="#dk"/></svg><div class="t" style="top:557.5px;font-size:15px;line-height:20px;left:1160px;">桌面</div><svg class="a" style="left:1374.5px;top:560px;" width="13" height="13"><use href="#pn"/></svg><svg class="a" style="left:1137px;top:588.3px;" width="16" height="17"><use href="#dw"/></svg><div class="t" style="top:587.5px;font-size:15px;line-height:20px;left:1160px;">下载</div><svg class="a" style="left:1374.5px;top:590px;" width="13" height="13"><use href="#pn"/></svg><svg class="a" style="left:1138px;top:617.8px;" width="14" height="18"><use href="#dc"/></svg><div class="t" style="top:617.5px;font-size:15px;line-height:20px;left:1160px;">文档</div><svg class="a" style="left:1374.5px;top:620px;" width="13" height="13"><use href="#pn"/></svg><svg class="a" style="left:1136px;top:649.8px;" width="18" height="14"><use href="#pc"/></svg><div class="t" style="top:647.5px;font-size:15px;line-height:20px;left:1160px;">图片</div><svg class="a" style="left:1374.5px;top:650px;" width="13" height="13"><use href="#pn"/></svg><svg class="a" style="left:1138px;top:678.1px;" width="12" height="17.4"><use href="#fo"/></svg><div class="t" style="top:677.5px;font-size:15px;line-height:20px;left:1160px;letter-spacing:0.500px;">docs</div><svg class="a" style="left:1138px;top:708.1px;" width="12" height="17.4"><use href="#fo"/></svg><div class="t" style="top:707.5px;font-size:15px;line-height:20px;left:1160px;letter-spacing:0.500px;">src</div><svg class="a" style="left:1138px;top:738.1px;" width="12" height="17.4"><use href="#fo"/></svg><div class="t" style="top:737.5px;font-size:15px;line-height:20px;left:1160px;letter-spacing:0.500px;">src</div><svg class="a" style="left:1138px;top:768.1px;" width="12" height="17.4"><use href="#fo"/></svg><div class="a" style="left:1160px;top:765.5px;width:230px;height:24px;overflow:hidden"><div class="t" style="top:2px;font-size:15px;line-height:20px;left:0px;letter-spacing:0.620px;">ThingsGateway.Plugin.FBModbus</div></div><svg class="a" style="left:1126px;top:808.8px;" width="20" height="16"><use href="#tp"/></svg><div class="t" style="top:807.5px;font-size:15px;line-height:20px;left:1150.5px;">此电脑</div><svg class="a" style="left:1136px;top:837.8px;" width="18" height="18"><use href="#cb"/></svg><div class="t" style="top:837.5px;font-size:15px;line-height:20px;left:1160px;letter-spacing:0.031px;">3D 对象</div><svg class="a" style="left:1136px;top:867.3px;" width="18" height="19"><use href="#vd"/></svg><div class="t" style="top:867.5px;font-size:15px;line-height:20px;left:1160px;">视频</div><svg class="a" style="left:1136px;top:899.8px;" width="18" height="14"><use href="#pc"/></svg><div class="t" style="top:897.5px;font-size:15px;line-height:20px;left:1160px;">图片</div><svg class="a" style="left:1138px;top:927.8px;" width="14" height="18"><use href="#dc"/></svg><div class="t" style="top:927.5px;font-size:15px;line-height:20px;left:1160px;">文档</div><svg class="a" style="left:1137px;top:958.3px;" width="16" height="17"><use href="#dw"/></svg><div class="t" style="top:957.5px;font-size:15px;line-height:20px;left:1160px;">下载</div><svg class="a" style="left:1139px;top:987.8px;" width="12" height="18"><use href="#mu"/></svg><div class="t" style="top:987.5px;font-size:15px;line-height:20px;left:1160px;">音乐</div><svg class="a" style="left:1136px;top:1019.8px;" width="18" height="14"><use href="#dk"/></svg><div class="t" style="top:1017.5px;font-size:15px;line-height:20px;left:1160px;">桌面</div><svg class="a" style="left:1136px;top:1056px;" width="18" height="9.5"><use href="#dr"/></svg><svg class="a" style="left:1134.5px;top:1051px;" width="9" height="9"><use href="#wl"/></svg><div class="t" style="top:1047.5px;font-size:15px;line-height:20px;left:1160px;letter-spacing:-0.223px;">系统 (C:)</div><svg class="a" style="left:1136px;top:1086px;" width="18" height="9.5"><use href="#dr"/></svg><div class="t" style="top:1077.5px;font-size:15px;line-height:20px;left:1160px;letter-spacing:-0.166px;">软件 (D:)</div><div class="a" style="left:1095px;top:1102px;width:296px;height:30px;background:#d9d9d9;"></div><svg class="a" style="left:1136px;top:1116px;" width="18" height="9.5"><use href="#dr"/></svg><div class="t" style="top:1107.5px;font-size:15px;line-height:20px;left:1160px;letter-spacing:-0.404px;">文档 (E:)</div><svg class="a" style="left:1126px;top:1147.8px;" width="20" height="18"><use href="#nw"/></svg><div class="t" style="top:1147.5px;font-size:15px;line-height:20px;left:1150.5px;">网络</div><div class="t" style="top:509px;font-size:15px;line-height:20px;left:1416.8px;color:#4c607a;">名称</div><div class="t" style="top:509px;font-size:15px;line-height:20px;left:1743px;color:#4c607a;">修改日期</div><div class="t" style="top:509px;font-size:15px;line-height:20px;left:1923px;color:#4c607a;">类型</div><div class="t" style="top:509px;font-size:15px;line-height:20px;left:2072.8px;color:#4c607a;">大小</div><div class="a" style="left:1735px;top:502px;width:1px;height:32px;background:#e5e5e5;"></div><div class="a" style="left:1915px;top:502px;width:1px;height:32px;background:#e5e5e5;"></div><div class="a" style="left:2065px;top:502px;width:1px;height:32px;background:#e5e5e5;"></div><div class="a" style="left:2165px;top:502px;width:1px;height:32px;background:#e5e5e5;"></div><svg class="a" style="left:1568px;top:503px;" width="10" height="6" viewBox="0 0 10 6"><path d="M0.800 5l4.200-4 4.200 4" fill="none" stroke="#8a8a8a" stroke-width="1"/></svg><svg class="a" style="left:1422px;top:546.9px;" width="12" height="17.4"><use href="#fo"/></svg><div class="t" style="top:546.6px;font-size:15px;line-height:20px;left:1444px;letter-spacing:0.690px;">Config</div><div class="t" style="top:546.6px;font-size:15px;line-height:20px;left:1743px;color:#6d6d6d;letter-spacing:0.604px;">2024/1/21 12:54</div><div class="t" style="top:546.6px;font-size:15px;line-height:20px;left:1923px;color:#6d6d6d;">文件夹</div><svg class="a" style="left:1422px;top:573.9px;" width="12" height="17.4"><use href="#fo"/></svg><div class="t" style="top:573.6px;font-size:15px;line-height:20px;left:1444px;letter-spacing:0.500px;">cs</div><div class="t" style="top:573.6px;font-size:15px;line-height:20px;left:1743px;color:#6d6d6d;letter-spacing:0.604px;">2024/1/21 12:53</div><div class="t" style="top:573.6px;font-size:15px;line-height:20px;left:1923px;color:#6d6d6d;">文件夹</div><svg class="a" style="left:1422px;top:600.9px;" width="12" height="17.4"><use href="#fo"/></svg><div class="t" style="top:600.6px;font-size:15px;line-height:20px;left:1444px;letter-spacing:0.500px;">de</div><div class="t" style="top:600.6px;font-size:15px;line-height:20px;left:1743px;color:#6d6d6d;letter-spacing:0.604px;">2024/1/21 12:53</div><div class="t" style="top:600.6px;font-size:15px;line-height:20px;left:1923px;color:#6d6d6d;">文件夹</div><svg class="a" style="left:1422px;top:627.9px;" width="12" height="17.4"><use href="#fo"/></svg><div class="t" style="top:627.6px;font-size:15px;line-height:20px;left:1444px;letter-spacing:0.500px;">es</div><div class="t" style="top:627.6px;font-size:15px;line-height:20px;left:1743px;color:#6d6d6d;letter-spacing:0.604px;">2024/1/21 12:53</div><div class="t" style="top:627.6px;font-size:15px;line-height:20px;left:1923px;color:#6d6d6d;">文件夹</div><svg class="a" style="left:1422px;top:654.9px;" width="12" height="17.4"><use href="#fo"/></svg><div class="t" style="top:654.6px;font-size:15px;line-height:20px;left:1444px;letter-spacing:0.500px;">fr</div><div class="t" style="top:654.6px;font-size:15px;line-height:20px;left:1743px;color:#6d6d6d;letter-spacing:0.604px;">2024/1/21 12:53</div><div class="t" style="top:654.6px;font-size:15px;line-height:20px;left:1923px;color:#6d6d6d;">文件夹</div><svg class="a" style="left:1422px;top:681.9px;" width="12" height="17.4"><use href="#fo"/></svg><div class="t" style="top:681.6px;font-size:15px;line-height:20px;left:1444px;letter-spacing:0.500px;">it</div><div class="t" style="top:681.6px;font-size:15px;line-height:20px;left:1743px;color:#6d6d6d;letter-spacing:0.604px;">2024/1/21 12:53</div><div class="t" style="top:681.6px;font-size:15px;line-height:20px;left:1923px;color:#6d6d6d;">文件夹</div><svg class="a" style="left:1422px;top:708.9px;" width="12" height="17.4"><use href="#fo"/></svg><div class="t" style="top:708.6px;font-size:15px;line-height:20px;left:1444px;letter-spacing:0.500px;">ja</div><div class="t" style="top:708.6px;font-size:15px;line-height:20px;left:1743px;color:#6d6d6d;letter-spacing:0.604px;">2024/1/21 12:53</div><div class="t" style="top:708.6px;font-size:15px;line-height:20px;left:1923px;color:#6d6d6d;">文件夹</div><svg class="a" style="left:1422px;top:735.9px;" width="12" height="17.4"><use href="#fo"/></svg><div class="t" style="top:735.6px;font-size:15px;line-height:20px;left:1444px;letter-spacing:0.500px;">ko</div><div class="t" style="top:735.6px;font-size:15px;line-height:20px;left:1743px;color:#6d6d6d;letter-spacing:0.604px;">2024/1/21 12:53</div><div class="t" style="top:735.6px;font-size:15px;line-height:20px;left:1923px;color:#6d6d6d;">文件夹</div><svg class="a" style="left:1422px;top:762.9px;" width="12" height="17.4"><use href="#fo"/></svg><div class="t" style="top:762.6px;font-size:15px;line-height:20px;left:1444px;letter-spacing:0.087px;">ListDBCache</div><div class="t" style="top:762.6px;font-size:15px;line-height:20px;left:1743px;color:#6d6d6d;letter-spacing:0.604px;">2024/1/21 12:54</div><div class="t" style="top:762.6px;font-size:15px;line-height:20px;left:1923px;color:#6d6d6d;">文件夹</div><svg class="a" style="left:1422px;top:789.9px;" width="12" height="17.4"><use href="#fo"/></svg><div class="t" style="top:789.6px;font-size:15px;line-height:20px;left:1444px;letter-spacing:0.824px;">Log</div><div class="t" style="top:789.6px;font-size:15px;line-height:20px;left:1743px;color:#6d6d6d;letter-spacing:0.604px;">2024/1/21 12:54</div><div class="t" style="top:789.6px;font-size:15px;line-height:20px;left:1923px;color:#6d6d6d;">文件夹</div><svg class="a" style="left:1422px;top:816.9px;" width="12" height="17.4"><use href="#fo"/></svg><div class="t" style="top:816.6px;font-size:15px;line-height:20px;left:1444px;letter-spacing:0.500px;">pl</div><div class="t" style="top:816.6px;font-size:15px;line-height:20px;left:1743px;color:#6d6d6d;letter-spacing:0.604px;">2024/1/21 12:53</div><div class="t" style="top:816.6px;font-size:15px;line-height:20px;left:1923px;color:#6d6d6d;">文件夹</div><svg class="a" style="left:1422px;top:843.9px;" width="12" height="17.4"><use href="#fo"/></svg><div class="t" style="top:843.6px;font-size:15px;line-height:20px;left:1444px;letter-spacing:0.329px;">Plugins</div><div class="t" style="top:843.6px;font-size:15px;line-height:20px;left:1743px;color:#6d6d6d;letter-spacing:0.604px;">2024/1/21 12:53</div><div class="t" style="top:843.6px;font-size:15px;line-height:20px;left:1923px;color:#6d6d6d;">文件夹</div><svg class="a" style="left:1422px;top:870.9px;" width="12" height="17.4"><use href="#fo"/></svg><div class="t" style="top:870.6px;font-size:15px;line-height:20px;left:1444px;letter-spacing:0.431px;">pt-BR</div><div class="t" style="top:870.6px;font-size:15px;line-height:20px;left:1743px;color:#6d6d6d;letter-spacing:0.604px;">2024/1/21 12:53</div><div class="t" style="top:870.6px;font-size:15px;line-height:20px;left:1923px;color:#6d6d6d;">文件夹</div><svg class="a" style="left:1422px;top:897.9px;" width="12" height="17.4"><use href="#fo"/></svg><div class="t" style="top:897.6px;font-size:15px;line-height:20px;left:1444px;letter-spacing:0.500px;">ru</div><div class="t" style="top:897.6px;font-size:15px;line-height:20px;left:1743px;color:#6d6d6d;letter-spacing:0.604px;">2024/1/21 12:53</div><div class="t" style="top:897.6px;font-size:15px;line-height:20px;left:1923px;color:#6d6d6d;">文件夹</div><svg class="a" style="left:1422px;top:924.9px;" width="12" height="17.4"><use href="#fo"/></svg><div class="t" style="top:924.6px;font-size:15px;line-height:20px;left:1444px;letter-spacing:0.348px;">SeedData</div><div class="t" style="top:924.6px;font-size:15px;line-height:20px;left:1743px;color:#6d6d6d;letter-spacing:0.604px;">2024/1/21 12:53</div><div class="t" style="top:924.6px;font-size:15px;line-height:20px;left:1923px;color:#6d6d6d;">文件夹</div><svg class="a" style="left:1422px;top:951.9px;" width="12" height="17.4"><use href="#fo"/></svg><div class="t" style="top:951.6px;font-size:15px;line-height:20px;left:1444px;letter-spacing:0.500px;">tr</div><div class="t" style="top:951.6px;font-size:15px;line-height:20px;left:1743px;color:#6d6d6d;letter-spacing:0.604px;">2024/1/21 12:53</div><div class="t" style="top:951.6px;font-size:15px;line-height:20px;left:1923px;color:#6d6d6d;">文件夹</div><svg class="a" style="left:1422px;top:978.9px;" width="12" height="17.4"><use href="#fo"/></svg><div class="t" style="top:978.6px;font-size:15px;line-height:20px;left:1444px;letter-spacing:1.308px;">wwwroot</div><div class="t" style="top:978.6px;font-size:15px;line-height:20px;left:1743px;color:#6d6d6d;letter-spacing:0.604px;">2024/1/21 12:53</div><div class="t" style="top:978.6px;font-size:15px;line-height:20px;left:1923px;color:#6d6d6d;">文件夹</div><svg class="a" style="left:1422px;top:1005.9px;" width="12" height="17.4"><use href="#fo"/></svg><div class="t" style="top:1005.6px;font-size:15px;line-height:20px;left:1444px;letter-spacing:0.235px;">zh-Hans</div><div class="t" style="top:1005.6px;font-size:15px;line-height:20px;left:1743px;color:#6d6d6d;letter-spacing:0.604px;">2024/1/21 12:53</div><div class="t" style="top:1005.6px;font-size:15px;line-height:20px;left:1923px;color:#6d6d6d;">文件夹</div><svg class="a" style="left:1422px;top:1032.9px;" width="12" height="17.4"><use href="#fo"/></svg><div class="t" style="top:1032.6px;font-size:15px;line-height:20px;left:1444px;letter-spacing:0.582px;">zh-Hant</div><div class="t" style="top:1032.6px;font-size:15px;line-height:20px;left:1743px;color:#6d6d6d;letter-spacing:0.604px;">2024/1/21 12:53</div><div class="t" style="top:1032.6px;font-size:15px;line-height:20px;left:1923px;color:#6d6d6d;">文件夹</div><svg class="a" style="left:1421.5px;top:1059.2px;" width="14.5" height="18"><use href="#dl"/></svg><div class="t" style="top:1059.6px;font-size:15px;line-height:20px;left:1444px;letter-spacing:1.016px;">Admin.db</div><div class="t" style="top:1059.6px;font-size:15px;line-height:20px;left:1743px;color:#6d6d6d;letter-spacing:0.604px;">2024/1/21 12:54</div><div class="t" style="top:1059.6px;font-size:15px;line-height:20px;left:1923px;color:#6d6d6d;letter-spacing:-0.027px;">Data Base File</div><div class="t" style="top:1059.6px;font-size:15px;line-height:20px;right:404.35px;color:#6d6d6d;letter-spacing:0.150px;">68 KB</div><svg class="a" style="left:1421.5px;top:1086.2px;" width="14.5" height="18"><use href="#dl"/></svg><div class="t" style="top:1086.6px;font-size:15px;line-height:20px;left:1444px;letter-spacing:0.797px;">api-ms-win-core-console-l1-1-0.dll</div><div class="t" style="top:1086.6px;font-size:15px;line-height:20px;left:1743px;color:#6d6d6d;letter-spacing:0.620px;">2021/9/12 4:05</div><div class="t" style="top:1086.6px;font-size:15px;line-height:20px;left:1923px;color:#6d6d6d;">应用程序扩展</div><div class="t" style="top:1086.6px;font-size:15px;line-height:20px;right:404.35px;color:#6d6d6d;letter-spacing:0.150px;">21 KB</div><svg class="a" style="left:1421.5px;top:1113.2px;" width="14.5" height="18"><use href="#dl"/></svg><div class="t" style="top:1113.6px;font-size:15px;line-height:20px;left:1444px;letter-spacing:0.797px;">api-ms-win-core-console-l1-2-0.dll</div><div class="t" style="top:1113.6px;font-size:15px;line-height:20px;left:1743px;color:#6d6d6d;letter-spacing:0.620px;">2021/9/12 4:05</div><div class="t" style="top:1113.6px;font-size:15px;line-height:20px;left:1923px;color:#6d6d6d;">应用程序扩展</div><div class="t" style="top:1113.6px;font-size:15px;line-height:20px;right:404.35px;color:#6d6d6d;letter-spacing:0.150px;">21 KB</div><svg class="a" style="left:1421.5px;top:1140.2px;" width="14.5" height="18"><use href="#dl"/></svg><div class="t" style="top:1140.6px;font-size:15px;line-height:20px;left:1444px;letter-spacing:0.865px;">api-ms-win-core-datetime-l1-1-0.dll</div><div class="t" style="top:1140.6px;font-size:15px;line-height:20px;left:1743px;color:#6d6d6d;letter-spacing:0.620px;">2021/9/12 4:05</div><div class="t" style="top:1140.6px;font-size:15px;line-height:20px;left:1923px;color:#6d6d6d;">应用程序扩展</div><div class="t" style="top:1140.6px;font-size:15px;line-height:20px;right:404.35px;color:#6d6d6d;letter-spacing:0.150px;">21 KB</div><svg class="a" style="left:1421.5px;top:1167.2px;" width="14.5" height="18"><use href="#dl"/></svg><div class="t" style="top:1167.6px;font-size:15px;line-height:20px;left:1444px;letter-spacing:0.877px;">api-ms-win-core-debug-l1-1-0.dll</div><div class="t" style="top:1167.6px;font-size:15px;line-height:20px;left:1743px;color:#6d6d6d;letter-spacing:0.620px;">2021/9/12 4:05</div><div class="t" style="top:1167.6px;font-size:15px;line-height:20px;left:1923px;color:#6d6d6d;">应用程序扩展</div><div class="t" style="top:1167.6px;font-size:15px;line-height:20px;right:404.35px;color:#6d6d6d;letter-spacing:0.150px;">21 KB</div><svg class="a" style="left:1421.5px;top:1194.2px;" width="14.5" height="18"><use href="#dl"/></svg><div class="t" style="top:1194.6px;font-size:15px;line-height:20px;left:1444px;letter-spacing:0.774px;">api-ms-win-core-errorhandling-l1-1-...</div><div class="t" style="top:1194.6px;font-size:15px;line-height:20px;left:1743px;color:#6d6d6d;letter-spacing:0.620px;">2021/9/12 4:05</div><div class="t" style="top:1194.6px;font-size:15px;line-height:20px;left:1923px;color:#6d6d6d;">应用程序扩展</div><div class="t" style="top:1194.6px;font-size:15px;line-height:20px;right:404.35px;color:#6d6d6d;letter-spacing:0.150px;">21 KB</div><svg class="a" style="left:1421.5px;top:1221.2px;" width="14.5" height="18"><use href="#dl"/></svg><div class="t" style="top:1221.6px;font-size:15px;line-height:20px;left:1444px;letter-spacing:0.791px;">api-ms-win-core-fibers-l1-1-0.dll</div><div class="t" style="top:1221.6px;font-size:15px;line-height:20px;left:1743px;color:#6d6d6d;letter-spacing:0.620px;">2021/9/12 4:05</div><div class="t" style="top:1221.6px;font-size:15px;line-height:20px;left:1923px;color:#6d6d6d;">应用程序扩展</div><div class="t" style="top:1221.6px;font-size:15px;line-height:20px;right:404.35px;color:#6d6d6d;letter-spacing:0.150px;">21 KB</div><svg class="a" style="left:1421.5px;top:1248.2px;" width="14.5" height="18"><use href="#dl"/></svg><div class="t" style="top:1248.6px;font-size:15px;line-height:20px;left:1444px;letter-spacing:0.794px;">api-ms-win-core-file-l1-1-0.dll</div><div class="t" style="top:1248.6px;font-size:15px;line-height:20px;left:1743px;color:#6d6d6d;letter-spacing:0.620px;">2021/9/12 4:05</div><div class="t" style="top:1248.6px;font-size:15px;line-height:20px;left:1923px;color:#6d6d6d;">应用程序扩展</div><div class="t" style="top:1248.6px;font-size:15px;line-height:20px;right:404.35px;color:#6d6d6d;letter-spacing:0.150px;">25 KB</div><svg class="a" style="left:1421.5px;top:1275.2px;" width="14.5" height="18"><use href="#dl"/></svg><div class="t" style="top:1275.6px;font-size:15px;line-height:20px;left:1444px;letter-spacing:0.794px;">api-ms-win-core-file-l1-2-0.dll</div><div class="t" style="top:1275.6px;font-size:15px;line-height:20px;left:1743px;color:#6d6d6d;letter-spacing:0.620px;">2021/9/12 4:05</div><div class="t" style="top:1275.6px;font-size:15px;line-height:20px;left:1923px;color:#6d6d6d;">应用程序扩展</div><div class="t" style="top:1275.6px;font-size:15px;line-height:20px;right:404.35px;color:#6d6d6d;letter-spacing:0.150px;">21 KB</div><div class="t" style="top:1298px;font-size:15px;line-height:20px;left:1112.5px;color:#1e3287;letter-spacing:0.400px;">533 个项目</div><div class="a" style="left:1200px;top:1298.5px;width:1px;height:20px;background:#eaeaea;"></div><div class="a" style="left:1415px;top:834px;width:112px;height:38.5px;border:3px solid #ee3b3b;box-sizing:border-box;"></div><div class="t" style="top:841px;font-size:20px;line-height:26px;left:1547px;color:#ee3b3b;">复制到发布文件夹</div></div></div><div class="a" style="left:2530px;top:1310px;width:40px;height:40px;border-radius:20px;background:linear-gradient(90deg,#7db3f8,#2a73f2)"></div><svg class="a" style="left:2544px;top:1322px;" width="9" height="16" viewBox="0 0 9 16"><path d="M7.500 1.500L2 8l5.500 6.500" fill="none" stroke="#fff" stroke-width="2.400"/></svg></body></html>
